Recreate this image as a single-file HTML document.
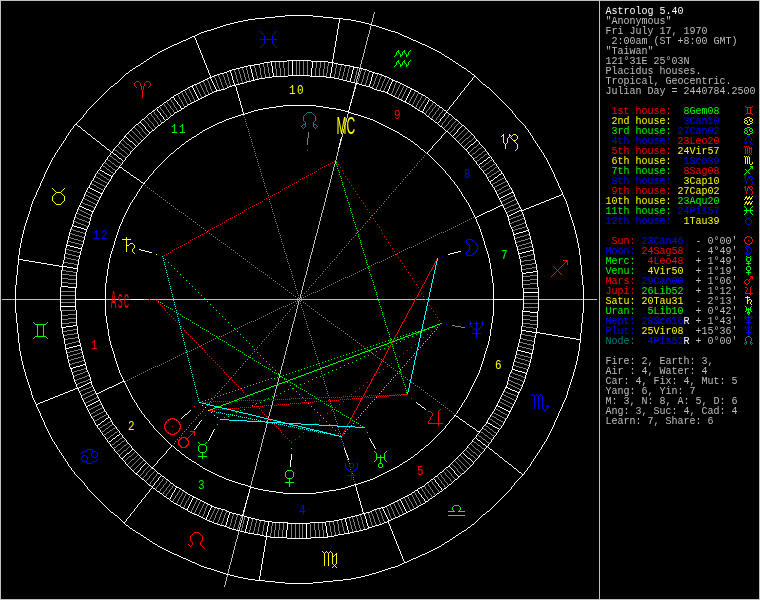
<!DOCTYPE html>
<html><head><meta charset="utf-8"><title>Astrolog 5.40</title>
<style>
html,body{margin:0;padding:0;background:#000;}
#c{position:relative;width:760px;height:600px;overflow:hidden;background:#000;}
svg{position:absolute;left:0;top:0;will-change:transform;}
svg path{stroke-width:1;fill:none;}
svg text{font-family:"Liberation Mono",monospace;}
svg text.ang{font-family:"Liberation Sans",sans-serif;font-size:11px;}
#side{position:absolute;left:0;top:0;width:760px;height:600px;will-change:transform;}
.r{position:absolute;left:605.5px;height:10px;font:10px/10px "Liberation Mono",monospace;color:#bfbfbf;white-space:pre;}
</style></head><body>
<div id="c">
<svg width="760" height="600" viewBox="0 0 760 600">
<g shape-rendering="crispEdges">
<path stroke="#ffffff" d="M285 15.5h28m-38 1h10m28 0h10m-58 1h10m48 0h10m-78 1h10m68 0h10m-95 1h7m88 0h8m-108 1h5m103 0h5m-118 1h5m113 0h5m-127 1h4m123 0h4m-135 1h4m131 0h4m-143 1h4m139 0h3m-149 1h3m146 0h4m-156 1h3m153 0h3m-162 1h3m159 0h3m-168 1h3m165 0h3m-174 1h3m171 0h3m-181 1h4m177 0h3m-187 1h3m184 0h4m-194 1h3m191 0h3m-199 1h2m197 0h2m-203 1h2m201 0h2m-207 1h2m205 0h2m-212 1h3m209 0h3m-217 1h2m215 0h2m-221 1h2m219 0h2m-225 1h2m223 0h2m-230 1h3m227 0h3m-235 1h2m233 0h2m-239 1h2m237 0h2m-243 1h2m241 0h2m-248 1h3m245 0h3m-253 1h2m251 0h2m-257 1h2m255 0h2m-261 1h2m259 0h2m-265 1h2m263 0h2m-269 1h2m267 0h2m-273 1h2m271 0h2m-277 1h2m275 0h2m-281 1h2m279 0h2m-286 2h2m285 0h2m-291 1h2m290 1h2m-297 1h2m295 0h2m-302 2h2m301 0h2m-165 1h24m-167 1h2m124 0h17m24 0h17m125 0h2m-191 1h6m58 0h6m-193 1h2m117 0h4m70 0h4m118 0h2m-204 1h6m78 0h6m-206 1h2m108 0h6m90 0h6m109 0h2m-325 1h2m106 0h4m102 0h4m-114 1h4m109 0h6m103 0h2m-331 1h2m101 0h4m119 0h4m101 0h2m-234 1h4m127 0h4m-237 1h2m97 0h3m135 0h2m-142 1h2m140 0h3m96 0h2m-246 1h3m145 0h3m-249 1h2m92 0h4m151 0h4m-162 1h3m159 0h3m90 0h2m-260 1h3m71 0h22m72 0h2m-172 1h2m58 0h16m22 0h16m58 0h3m87 0h2m-267 1h3m53 0h7m54 0h8m53 0h2m-182 1h2m50 0h6m69 0h5m50 0h2m-186 1h2m48 0h4m80 0h4m48 0h2m-190 1h2m46 0h4m88 0h4m45 0h3m-194 1h2m44 0h4m96 0h4m44 0h3m-199 1h2m43 0h3m104 0h4m43 0h2m-285 1h2m80 0h2m41 0h4m111 0h4m41 0h2m-208 1h3m39 0h4m119 0h3m40 0h2m79 0h2m-293 1h2m38 0h4m126 0h4m38 0h2m-295 1h2m77 0h3m36 0h3m134 0h4m36 0h2m-220 1h2m37 0h2m141 0h2m36 0h2m77 0h2m-264 1h2m145 0h2m36 0h2m-227 1h2m34 0h4m149 0h3m34 0h3m-231 1h2m31 0h5m156 0h4m33 0h2m-235 1h2m31 0h3m164 0h4m31 0h2m-206 1h2m171 0h3m-210 1h2m30 0h2m175 0h2m30 0h2m-245 1h2m30 0h2m179 0h2m30 0h2m-249 1h2m30 0h2m183 0h2m30 0h2m-221 1h2m187 0h2m-224 1h3m28 0h2m191 0h2m29 0h2m-228 1h2m195 0h2m-201 1h2m199 0h2m-234 1h2m27 0h2m203 0h2m27 0h2m-238 1h2m207 0h3m-242 1h2m26 0h2m211 0h2m26 0h2m-245 1h2m215 0h2m-221 1h2m219 0h2m-251 1h2m121 0h33m121 0h2m-254 1h2m89 0h7m33 0h7m89 0h2m-257 1h2m110 0h7m47 0h6m111 0h2m-261 1h3m79 0h6m60 0h7m79 0h2m-159 1h5m73 0h5m-188 1h2m24 0h2m73 0h4m83 0h4m73 0h2m24 0h2m-269 1h2m72 0h3m91 0h4m71 0h3m-248 1h2m71 0h3m97 0h3m71 0h2m22 0h2m-299 1h2m94 0h3m103 0h3m-113 1h4m109 0h4m91 0h2m-280 1h2m65 0h3m117 0h3m-126 1h3m123 0h3m63 0h2m-197 1h3m129 0h3m-138 1h3m135 0h3m-228 1h2m22 0h2m58 0h3m141 0h3m58 0h2m22 0h2m-233 1h2m147 0h2m-153 1h2m151 0h2m-238 1h2m21 0h2m55 0h3m155 0h2m56 0h2m-220 1h2m160 0h2m-306 1h2m59 0h2m77 0h2m164 0h2m-225 1h2m53 0h2m168 0h2m77 0h2m-386 1h2m131 0h2m172 0h2m53 0h2m-233 1h2m176 0h2m-182 1h2m180 0h2m-186 1h2m184 0h2m-310 1h2m67 0h2m49 0h2m188 0h2m0 1h2m49 0h2m-299 1h2m49 0h2m195 0h2m-311 2h2m107 0h2m201 0h2m-278 2h2m68 0h2m207 0h2m-213 1h2m211 0h2m-314 1h2m94 1h2m217 0h2m66 1h2m-381 1h2m31 0h2m54 0h2m223 0h2m-231 3h2m231 0h2m54 0h2m-371 1h2m73 3h2m-72 1h2m312 0h2m42 0h2m-356 3h2m58 1h2m-59 1h2m372 3h2m-371 1h2m363 2h2m-6 3h2m-363 4h3m-22 3h2m22 0h2m-24 1h2m23 1h2m-24 1h2m394 0h2m-396 1h2m390 0h2m-392 1h2m20 0h2m-22 1h2m21 1h2m359 0h2m-360 2h2m352 1h2m-4 1h2m-350 1h2m0 1h2m-57 4h2m0 1h2m0 1h2m0 1h2m0 1h2m0 1h2m411 0h3m-414 1h3m406 0h2m-4 1h2m52 0h2m-58 1h2m52 0h2m-58 1h2m51 0h3m-58 1h2m51 0h2m-57 1h2m50 0h3m-5 1h2m-5 1h3m-5 1h2m-5 1h3m-5 1h2m-5 1h3m-39 1h3m31 0h2m-457 1h3m416 0h2m31 0h3m-452 1h2m412 0h2m31 0h2m-447 1h2m408 0h2m30 0h3m-443 1h3m403 0h2m30 0h2m-437 1h2m399 0h2m27 0h5m-433 1h3m393 0h3m27 0h2m-34 1h2m28 0h2m-34 1h2m28 0h2m-34 1h2m28 0h2m-34 1h2m28 0h2m-34 1h2m28 0h2m-34 1h2m-405 8h2m0 1h3m0 1h4m0 1h3m0 1h3m439 1h3m-6 1h3m-7 1h4m-7 1h3m-6 1h3m-450 11h4m0 1h4m0 1h4m0 1h4m57 1h2m0 1h4m385 0h4m-389 1h4m309 0h3m65 0h4m-381 1h3m302 0h4m64 0h4m-76 1h4m64 0h4m-74 1h2m-432 5h5m0 1h6m0 1h6m0 1h6m0 1h6m0 1h6m0 1h6m0 1h8m0 1h6m0 1h5m455 3h5m-12 1h7m-11 1h4m-465 13h7m0 1h9m446 5h16m-464 7h31m25 0h13m349 0h31m-464 7h16m446 5h8m0 1h8m-465 13h4m-11 1h7m-12 1h5m455 3h5m0 1h6m0 1h8m0 1h6m0 1h6m0 1h6m0 1h6m0 1h6m0 1h6m0 1h5m-504 6h4m-8 1h4m-8 1h4m-8 1h4m448 2h4m0 1h4m0 1h4m0 1h4m-450 11h3m-6 1h3m-7 1h4m-7 1h3m-6 1h3m439 1h3m0 1h3m0 1h4m0 1h3m0 1h2m-405 8h3m-36 1h3m28 0h2m-35 1h2m29 0h2m-35 1h2m29 0h2m-35 1h2m29 0h2m-35 1h2m29 0h2m-35 1h2m28 0h3m393 0h3m-433 1h4m28 0h2m399 0h2m-437 1h2m30 0h2m403 0h2m-442 1h3m30 0h2m407 0h3m-447 1h2m31 0h2m412 0h2m-452 1h3m31 0h2m416 0h3m-457 1h2m31 0h3m-39 1h3m-5 1h2m-5 1h3m-5 1h2m-5 1h3m-5 1h2m-5 1h3m50 0h2m-57 1h2m51 0h2m-58 1h3m51 0h2m-58 1h2m52 0h2m-58 1h2m52 0h2m326 0h2m-332 1h2m406 0h2m-412 1h2m410 0h2m-78 1h2m76 0h2m0 1h2m0 1h2m0 1h2m0 1h3m-326 3h2m267 1h2m0 1h2m-350 1h2m-4 1h2m352 1h2m-360 2h2m359 0h2m21 1h2m0 1h2m-392 1h2m367 0h2m21 0h2m-396 1h2m372 1h2m21 0h2m0 1h2m-24 1h2m22 0h2m-22 3h3m-363 4h2m-6 3h2m363 2h2m-371 1h2m372 3h2m-59 1h2m58 1h2m-356 3h2m287 0h2m67 0h2m-315 1h2m-52 3h2m366 0h2m-315 1h2m231 0h2m-231 3h2m223 0h2m87 0h2m-381 1h2m345 0h2m-281 1h2m217 0h2m-218 2h2m211 0h2m98 0h2m-313 1h2m207 0h2m-208 2h2m201 0h2m107 0h2m-311 2h2m195 0h2m49 0h2m-299 1h2m242 0h2m49 0h2m-296 1h2m49 0h2m188 0h2m119 0h2m-311 1h2m184 0h2m-186 1h2m180 0h2m-182 1h2m176 0h2m-178 1h2m172 0h2m53 0h2m77 0h2m-386 1h2m21 0h2m53 0h2m168 0h2m77 0h2m-328 1h2m77 0h2m164 0h2m139 0h2m-307 1h2m160 0h2m-219 1h2m55 0h3m155 0h2m56 0h2m21 0h2m-238 1h2m151 0h2m-153 1h2m147 0h2m-233 1h2m22 0h2m58 0h3m141 0h3m58 0h2m22 0h2m-228 1h3m135 0h3m-138 1h3m129 0h3m-132 1h3m123 0h3m63 0h2m-258 1h2m65 0h3m117 0h3m-120 1h4m109 0h4m91 0h2m-302 1h2m94 0h3m103 0h3m-203 1h2m22 0h2m71 0h3m97 0h3m71 0h2m-248 1h3m71 0h4m91 0h3m72 0h2m-269 1h2m24 0h2m73 0h4m83 0h4m73 0h2m24 0h2m-188 1h5m73 0h5m-159 1h2m79 0h6m60 0h7m79 0h3m-261 1h2m110 0h7m47 0h6m111 0h2m-257 1h2m89 0h7m33 0h7m89 0h2m-254 1h2m121 0h33m121 0h2m-251 1h2m219 0h2m-221 1h2m215 0h2m-245 1h2m26 0h2m211 0h2m26 0h2m-242 1h3m207 0h2m-238 1h2m27 0h2m203 0h2m27 0h2m-234 1h2m199 0h2m-201 1h2m195 0h2m-228 1h2m29 0h2m191 0h2m28 0h3m-224 1h2m187 0h2m-221 1h2m30 0h2m183 0h2m30 0h2m-249 1h2m30 0h2m179 0h2m30 0h2m-245 1h2m30 0h2m175 0h2m30 0h2m-210 1h3m171 0h2m-206 1h2m31 0h3m164 0h4m31 0h2m-235 1h2m32 0h4m156 0h4m33 0h2m-231 1h3m33 0h4m149 0h3m35 0h2m-189 1h2m145 0h2m36 0h2m-224 1h2m37 0h2m141 0h2m36 0h2m77 0h2m-378 1h2m77 0h2m37 0h3m134 0h4m36 0h2m-216 1h2m38 0h4m126 0h4m38 0h2m-212 1h3m39 0h4m119 0h3m40 0h2m79 0h2m-370 1h2m80 0h2m41 0h4m111 0h4m41 0h2m-203 1h2m43 0h3m104 0h4m43 0h2m-199 1h2m44 0h4m96 0h4m44 0h3m-195 1h2m46 0h4m88 0h4m46 0h2m-190 1h2m48 0h4m80 0h4m48 0h2m-186 1h2m50 0h6m69 0h5m49 0h3m-182 1h3m53 0h7m54 0h8m53 0h2m-266 1h2m87 0h2m58 0h16m22 0h16m58 0h3m-173 1h3m70 0h23m72 0h2m-167 1h3m159 0h3m90 0h2m-348 1h2m92 0h4m151 0h4m-155 1h3m145 0h3m-148 1h2m139 0h4m96 0h2m-340 1h2m97 0h3m135 0h2m-137 1h4m127 0h4m-234 1h2m101 0h4m119 0h4m101 0h2m-226 1h4m110 0h5m103 0h2m-328 1h2m106 0h4m102 0h4m-216 1h2m108 0h6m90 0h6m109 0h2m-207 1h6m78 0h6m-203 1h2m117 0h4m70 0h4m118 0h2m-194 1h6m57 0h7m-190 1h2m124 0h17m24 0h17m125 0h2m-168 1h24m-164 1h2m301 0h2m-302 2h2m295 0h2m-4 1h2m-294 1h2m0 1h2m285 0h2m-286 2h2m279 0h2m-281 1h2m275 0h2m-277 1h2m271 0h2m-273 1h2m267 0h2m-269 1h2m263 0h2m-265 1h2m259 0h2m-261 1h2m255 0h2m-257 1h2m251 0h2m-253 1h3m245 0h3m-248 1h2m241 0h2m-243 1h2m237 0h2m-239 1h2m233 0h2m-235 1h3m227 0h3m-230 1h2m223 0h2m-225 1h2m219 0h2m-221 1h2m215 0h2m-217 1h3m209 0h3m-212 1h2m205 0h2m-207 1h2m201 0h2m-203 1h2m197 0h2m-199 1h3m191 0h3m-194 1h3m184 0h4m-188 1h4m177 0h3m-180 1h3m171 0h3m-174 1h3m165 0h3m-168 1h3m159 0h3m-162 1h3m153 0h3m-156 1h3m146 0h4m-150 1h4m139 0h3m-142 1h4m131 0h4m-135 1h4m123 0h4m-127 1h5m113 0h5m-118 1h5m103 0h5m-108 1h7m88 0h8m-96 1h10m68 0h10m-78 1h10m48 0h10m-58 1h10m28 0h10m-38 1h28m-297.5-298.5v28m1-38v10m0 28v10m1-58v10m0 48v10m1-78v4m0 1v5m0 68v10m1-95v7m0 88v8m1-108v5m0 103v5m1-118v5m0 113v5m1-127v4m0 123v4m1-135v4m0 131v4m1-143v4m0 139v3m1-149v3m0 146v4m1-156v3m0 153v3m1-162v3m0 159v3m1-168v3m0 165v3m1-174v3m0 171v3m1-181v4m0 177v3m1-187v3m0 184v4m1-194v3m0 191v3m1-199v2m0 197v2m1-203v2m0 201v2m1-207v2m0 205v2m1-212v3m0 210v2m1-217v2m0 215v2m1-221v2m0 219v2m1-225v2m0 223v2m1-230v3m0 227v3m1-235v2m0 233v2m1-239v2m0 237v2m1-243v2m0 241v2m1-248v3m0 245v3m1-253v2m0 251v2m1-257v2m0 255v2m1-261v2m0 259v2m1-265v2m0 263v2m1-269v2m0 267v2m1-273v2m0 271v2m1-277v2m0 275v2m1-281v2m0 279v2m1-284v1m0 283v1m1-287v2m0 285v2m1-291v2m0 289v1m1-293v1m0 292v2m1-297v2m0 295v2m1-300v1m0 299v1m1-303v2m0 301v2m1-306v1m0 140v19m0 1v4m0 141v1m1-309v2m0 124v16m0 25v16m0 126v2m1-312v1m0 120v2m0 1v3m0 58v6m0 121v1m1-315v2m0 117v4m0 70v4m0 118v2m1-318v1m0 113v6m0 78v6m0 114v1m1-321v2m0 108v6m0 90v4m0 1v1m0 109v2m1-325v2m0 106v1m0 1v2m0 102v4m0 107v1m1-327v1m0 104v4m0 110v5m0 103v2m1-331v2m0 101v4m0 119v4m0 101v2m1-334v1m0 99v4m0 127v4m0 99v1m1-337v2m0 97v3m0 135v1m0 99v1m1-339v1m0 97v2m0 140v3m0 96v2m1-342v1m0 95v1m0 1v1m0 145v3m0 95v1m1-345v2m0 92v4m0 151v4m0 92v1m1-347v1m0 91v3m0 159v3m0 90v2m1-260v3m0 71v11m0 1v6m0 1v3m0 72v2m0 90v1m1-352v1m0 88v2m0 58v15m0 23v15m0 59v3m0 88v1m1-354v1m0 2v1m0 83v3m0 53v3m0 1v3m0 54v8m0 53v1m0 88v1m1-356v1m0 85v2m0 50v6m0 69v5m0 50v2m0 86v1m1-358v1m0 84v1m0 49v4m0 80v4m0 48v2m0 85v1m1-360v1m0 7v1m0 75v2m0 46v4m0 88v2m0 1v1m0 46v2m0 84v1m1-362v1m0 9v1m0 72v2m0 44v1m0 1v2m0 96v4m0 44v3m0 82v1m1-364v1m0 11v1m0 69v2m0 43v3m0 104v4m0 43v2m0 81v1m1-367v2m0 80v2m0 41v4m0 111v4m0 41v2m0 80v1m1-369v1m0 79v3m0 39v4m0 119v3m0 40v2m0 79v2m1-372v1m0 17v1m0 60v2m0 38v4m0 126v2m0 1v1m0 38v2m0 79v1m1-375v2m0 19v1m0 57v2m0 38v2m0 134v4m0 37v1m0 78v1m1-377v1m0 22v1m0 54v2m0 37v2m0 141v2m0 36v2m0 77v2m1-380v1m0 115v2m0 145v2m0 36v2m0 77v1m1-382v1m0 76v2m0 34v4m0 149v3m0 35v2m0 76v1m1-384v1m0 27v1m0 47v2m0 32v4m0 156v4m0 33v2m0 75v1m1-386v1m0 29v1m0 44v2m0 31v3m0 164v1m0 1v2m0 31v2m0 74v1m1-388v1m0 31v1m0 42v1m0 31v2m0 171v2m0 31v1m0 74v1m1-390v1m0 73v2m0 30v1m0 176v2m0 30v2m0 73v1m1-392v1m0 72v2m0 30v2m0 179v2m0 30v2m0 72v1m1-394v1m0 36v1m0 34v2m0 30v2m0 183v2m0 30v2m0 71v1m1-396v1m0 38v1m0 32v1m0 30v2m0 188v1m0 102v1m1-398v1m0 70v2m0 29v2m0 191v2m0 29v2m0 70v1m1-400v1m0 70v1m0 29v2m0 195v2m0 29v1m0 70v1m1-402v1m0 43v1m0 26v1m0 28v2m0 199v1m0 29v1m0 70v1m1-404v1m0 45v1m0 23v2m0 27v2m0 203v2m0 20v1m0 6v2m0 69v1m1-406v1m0 47v1m0 21v1m0 27v2m0 207v2m0 17v1m0 9v1m0 69v1m1-408v1m0 68v2m0 26v1m0 212v2m0 26v2m0 68v1m1-410v1m0 68v1m0 26v2m0 215v2m0 26v1m0 68v1m1-412v1m0 52v1m0 15v1m0 9v1m0 15v2m0 219v2m0 9v1m0 15v1m0 68v1m1-414v1m0 54v1m0 12v2m0 25v1m0 95v16m0 1v16m0 95v1m0 7v1m0 17v2m0 67v1m1-416v1m0 56v1m0 10v1m0 25v2m0 89v7m0 33v7m0 89v2m0 25v1m0 67v1m1-418v1m0 66v2m0 25v1m0 84v7m0 47v6m0 85v1m0 25v2m0 66v1m1-420v1m0 66v1m0 25v2m0 79v6m0 60v7m0 79v2m0 25v1m0 66v1m1-422v1m0 61v1m0 4v1m0 25v1m0 76v5m0 73v5m0 102v1m0 66v1m1-424v1m0 63v1m0 1v2m0 24v2m0 73v4m0 83v4m0 73v2m0 24v2m0 65v1m1-335v2m0 72v3m0 91v3m0 72v2m0 18v1m0 5v1m1-296v1m0 23v1m0 72v3m0 97v3m0 71v2m0 15v1m0 7v1m1-363v1m0 63v2m0 2v1m0 20v1m0 70v3m0 103v3m0 70v1m0 23v1m0 64v1m1-430v1m0 63v1m0 24v1m0 67v4m0 109v4m0 67v1m0 23v2m0 63v1m1-368v1m0 23v2m0 65v3m0 117v3m0 65v1m0 10v1m0 13v1m1-306v1m0 8v1m0 14v1m0 64v3m0 123v3m0 63v2m0 7v1m0 15v1m1-371v1m0 62v1m0 10v1m0 12v1m0 62v3m0 129v3m0 62v1m0 23v1m0 62v1m1-436v1m0 62v1m0 12v1m0 10v1m0 60v3m0 135v3m0 60v1m0 23v1m0 62v1m1-438v1m0 61v2m0 22v1m0 59v3m0 141v3m0 58v2m0 1v1m0 20v2m0 61v1m1-440v1m0 61v1m0 23v1m0 58v2m0 147v2m0 58v1m0 23v1m0 61v1m1-442v1m0 61v1m0 18v1m0 4v1m0 57v2m0 151v2m0 57v1m0 85v1m1-444v1m0 61v1m0 20v1m0 1v2m0 4v1m0 50v3m0 155v2m0 56v2m0 22v1m0 61v1m1-446v1m0 61v1m0 22v1m0 7v1m0 47v2m0 160v2m0 56v1m0 19v1m0 2v1m1-386v1m0 61v1m0 22v1m0 54v2m0 165v1m0 55v1m0 17v1m0 4v1m0 61v1m1-450v1m0 60v1m0 22v2m0 53v2m0 168v2m0 54v1m0 15v1m0 6v2m0 57v1m0 2v1m1-391v1m0 2v1m0 19v1m0 13v1m0 39v2m0 172v2m0 53v2m0 12v1m0 9v1m0 54v2m1-388v1m0 4v1m0 17v1m0 52v2m0 176v2m0 53v1m0 22v1m0 52v1m1-447v1m0 59v1m0 6v1m0 15v1m0 51v2m0 180v2m0 52v1m0 22v1m0 50v1m0 8v1m1-456v1m0 59v1m0 8v1m0 13v1m0 18v1m0 31v2m0 184v2m0 51v1m0 7v1m0 14v1m0 48v1m0 10v1m1-398v1m0 21v2m0 20v1m0 28v2m0 188v2m0 50v1m0 5v1m0 16v1m0 45v2m1-387v1m0 21v1m0 50v1m0 192v2m0 49v2m0 2v1m0 18v1m0 43v1m1-445v1m0 58v1m0 13v1m0 7v1m0 49v2m0 195v2m0 49v1m0 21v1m0 41v1m0 16v1m1-403v1m0 15v1m0 5v1m0 26v1m0 22v1m0 199v1m0 71v1m0 39v1m1-386v1m0 17v1m0 3v1m0 48v2m0 201v2m0 48v1m0 21v1m0 36v2m1-444v1m0 57v1m0 19v1m0 1v1m0 48v1m0 205v1m0 48v1m0 56v1m0 22v1m1-386v1m0 31v1m0 15v2m0 207v2m0 47v1m0 54v1m1-363v1m0 46v2m0 211v2m0 46v1m0 18v1m0 32v2m1-384v1m0 20v1m0 46v1m0 215v1m0 46v1m0 16v1m0 3v1m0 28v1m1-362v1m0 36v1m0 8v2m0 217v2m0 45v1m0 14v1m0 5v1m0 26v1m1-440v1m0 56v1m0 20v1m0 38v1m0 6v1m0 221v1m0 45v1m0 11v2m0 7v1m0 24v1m0 31v1m1-415v1m0 2v1m0 17v1m0 44v2m0 223v2m0 44v1m0 9v1m0 10v1m0 21v2m1-378v1m0 15v1m0 44v1m0 227v1m0 44v1m0 7v1m0 32v1m1-438v1m0 62v1m0 13v1m0 274v1m0 44v1m0 5v1m0 32v1m0 37v1m1-419v1m0 7v1m0 11v1m0 43v1m0 232v2m0 43v1m0 3v1m0 15v1m0 16v1m1-381v1m0 9v2m0 8v1m0 43v1m0 235v1m0 43v1m0 1v1m0 17v1m0 13v2m1-437v1m0 55v1m0 12v1m0 6v1m0 43v1m0 237v1m0 43v1m0 19v1m0 11v1m0 43v1m1-424v1m0 14v1m0 4v1m0 43v1m0 239v1m0 43v1m0 19v1m0 9v1m1-380v1m0 16v1m0 2v1m0 42v2m0 241v1m0 43v1m0 19v1m0 7v1m1-435v1m0 74v1m0 42v1m0 244v2m0 42v1m0 24v2m0 48v1m1-366v1m0 247v1m0 42v1m0 22v1m1-378v1m0 18v1m0 42v1m0 249v1m0 63v1m1-433v1m0 54v1m0 61v1m0 251v1m0 61v1m0 54v1m1-372v2m0 253v2m0 38v1m0 18v1m1-357v1m0 40v1m0 257v1m0 36v1m0 3v1m0 13v2m1-376v1m0 18v1m0 40v1m0 259v1m0 34v1m0 5v1m0 11v1m0 6v1m1-382v1m0 18v1m0 40v1m0 261v1m0 32v1m0 7v1m0 9v1m0 8v1m1-438v1m0 55v2m0 15v1m0 40v1m0 263v1m0 29v2m0 9v1m0 7v1m0 64v1m1-435v1m0 54v1m0 265v1m0 27v1m0 17v2m1-374v1m0 5v1m0 52v1m0 267v1m0 25v1m0 17v1m0 14v1m1-380v2m0 9v1m0 39v1m0 269v1m0 23v1m0 15v1m0 1v1m1-362v1m0 7v1m0 39v1m0 271v1m0 21v1m0 17v1m1-372v1m0 11v1m0 45v1m0 273v1m0 19v1m0 37v1m1-392v1m0 13v2m0 42v1m0 275v1m0 17v1m0 39v1m1-377v1m0 1v1m0 38v1m0 277v1m0 15v1m0 22v1m1-358v1m0 38v1m0 279v1m0 13v1m0 24v1m1-378v1m0 56v1m0 281v1m0 10v2m0 44v1m1-341v1m0 283v1m0 8v1m1-333v1m0 37v1m0 285v1m0 6v1m0 30v1m1-382v1m0 17v1m0 37v1m0 287v1m0 4v1m0 32v1m0 17v1m1-402v1m0 17v1m0 37v1m0 289v1m0 2v1m0 34v1m0 14v2m0 1v1m1-56v2m0 48v2m1-4v2m1-399v1m0 17v1m0 37v1m0 293v1m0 37v1m0 7v1m0 9v1m1-405v2m0 13v1m0 37v1m0 295v1m0 37v1m0 4v2m1-392v1m0 49v1m0 297v1m0 39v2m1-389v1m0 47v1m0 299v1m1-348v2m1 0v1m1 0v1m0 41v1m0 303v1m1-360v1m0 13v2m0 38v1m0 305v1m0 53v1m1-398v1m0 35v1m0 272v1m0 34v1m0 35v1m1-73v1m1-2v1m1-310v1m0 35v1m0 271v1m0 39v1m0 35v1m1-350v1m0 313v1m2-369v1m0 16v1m0 307v1m0 79v1m0 14v1m0 1v1m1-371v1m0 271v1m0 45v1m0 47v2m1-97v1m0 92v2m1-96v1m0 91v2m1-366v1m0 321v1m0 39v2m1-415v1m0 410v2m1-412v2m1-53v1m0 52v2m0 337v1m1-392v2m0 52v2m0 334v1m1-389v3m0 51v2m0 39v1m0 290v2m0 35v1m1-421v2m0 51v2m0 327v1m1-381v3m0 50v1m0 325v1m1-377v2m0 83v1m0 288v2m0 41v1m1-416v3m0 368v1m1-369v2m0 365v1m1-366v3m0 73v1m0 335v1m1-410v2m1 0v3m1 0v2m1 0v3m0 449v2m1-451v2m0 445v2m1-447v3m0 367v1m0 71v3m1-442v2m0 363v2m0 70v2m1-437v2m0 1v1m0 357v2m0 70v2m1-431v2m0 353v2m0 71v1m1-427v2m0 349v2m1-351v2m0 345v2m1-347v2m0 342v1m1-343v2m1 0v1m9 435v1m1-4v3m1-7v4m1-7v3m1-5v2m1-444v2m1 0v3m1 0v4m1 0v3m1 0v2m1 1v1m1 0v4m1 0v3m1 0v4m1 0v3m1 0v4m1 0v3m1 0v4m0 402v1m1-403v2m0 396v4m1-7v3m1-7v4m0 22v3m1-32v3m0 22v4m1-33v4m0 21v4m1-32v3m0 22v3m1-32v4m1-427v3m0 419v1m1-420v4m1 0v4m1 0v3m6 496v4m1-10v6m1-12v6m1-12v6m1-12v6m1-12v6m1-12v6m1-14v4m0 1v3m1-14v6m1-10v4m3-464v4m1 0v7m1 0v3m13 454v7m1-13v6m3-70v7m1-13v6m1-399v14m14 449v14m5-470v8m1-14v6m13 455v3m1 0v7m1 0v3m3-463v4m1-10v6m1-14v3m0 1v4m1-14v6m1-12v6m1-12v6m1-12v6m1-12v6m1-12v6m0 118v2m1-130v4m0 120v4m1-8v4m1-6v2m3 309v2m1 0v3m0 66v3m1-69v2m0 67v4m1-71v3m0 68v4m1-420v1m0 347v2m0 70v3m1-427v4m1-32v3m0 22v3m1-32v4m0 21v4m1-33v4m0 22v3m1-31v2m0 22v4m1-7v3m1-7v4m0 396v2m1-403v1m0 402v4m1 0v3m1 0v4m1 0v3m1 0v4m1 0v3m1 0v4m1 0v1m1 1v2m1 0v3m1 0v4m1 0v3m1 0v1m1-443v2m0 352v1m1-358v3m0 355v2m1-364v4m0 360v2m1-369v3m0 366v1m1-371v1m0 370v2m1 0v2m1 0v1m7 59v1m1 0v2m1 0v2m1 0v2m1 0v2m1-426v1m0 425v2m1-430v2m0 428v1m0 2v2m1-438v3m0 435v2m1-442v2m0 440v3m1-447v2m0 445v2m1-450v1m0 449v3m1 0v2m1 0v3m1 0v2m1 0v3m1 0v2m1 0v3m1-416v1m0 331v1m0 83v2m1-51v1m0 50v3m1-53v2m0 51v2m1-421v1m0 327v1m0 39v2m0 51v3m1-54v2m0 52v2m1-54v2m0 52v1m1-462v1m0 408v2m1-413v2m0 411v1m1-416v2m0 40v1m0 321v1m1-367v2m1-4v2m1-4v2m0 48v1m0 317v1m1-354v1m0 387v1m2-352v1m0 313v1m1-350v1m0 35v1m0 311v1m0 35v1m2-90v1m1-294v1m0 35v1m0 257v1m0 49v1m0 35v1m1-398v1m0 53v1m0 305v1m0 38v2m0 13v1m1-360v1m0 303v1m0 41v1m1-346v1m0 256v1m0 44v1m0 43v1m1-89v1m0 88v2m1 0v1m1-389v2m0 39v1m0 297v1m0 49v1m1-392v2m0 4v1m0 37v1m0 256v1m0 38v1m0 37v1m0 13v2m1-405v1m0 8v2m0 7v1m0 37v1m0 256v1m0 36v1m0 37v1m0 17v1m1-399v1m0 10v1m0 367v1m1-382v2m0 48v2m1-56v1m0 1v2m0 49v1m0 2v1m0 289v1m0 55v1m1-402v1m0 17v1m0 32v1m0 4v1m0 287v1m0 37v1m0 17v1m1-382v1m0 30v1m0 6v1m0 285v1m0 37v1m1-333v1m0 8v1m0 283v1m1-341v1m0 44v2m0 10v1m0 281v1m0 56v1m1-378v1m0 24v1m0 13v1m0 279v1m0 38v1m1-358v1m0 22v1m0 15v1m0 277v1m0 38v1m0 1v1m1-377v1m0 39v1m0 17v1m0 275v1m0 42v2m0 13v1m1-392v1m0 37v1m0 19v1m0 273v1m0 45v1m0 11v1m1-372v1m0 17v1m0 21v1m0 271v1m0 39v1m0 7v1m1-362v1m0 1v1m0 15v1m0 23v1m0 269v1m0 39v1m0 9v2m1-380v1m0 14v1m0 3v1m0 13v1m0 25v1m0 267v1m0 39v1m0 12v1m0 5v1m1-374v2m0 17v1m0 27v1m0 265v1m0 54v1m1-435v1m0 64v1m0 17v2m0 29v1m0 263v1m0 56v2m0 55v1m1-438v1m0 8v1m0 9v1m0 7v1m0 32v1m0 261v1m0 40v1m0 18v1m1-382v1m0 6v1m0 11v1m0 5v1m0 34v1m0 259v1m0 40v1m0 18v1m1-435v1m0 58v2m0 13v1m0 3v1m0 36v1m0 257v1m0 40v1m0 73v1m1-431v1m0 16v1m0 1v1m0 38v2m0 253v2m0 40v1m1-358v1m0 61v1m0 251v1m0 61v1m1-378v1m0 63v1m0 249v1m0 61v1m1-378v1m0 3v1m0 18v1m0 42v1m0 247v1m0 61v1m1-428v1m0 48v2m0 24v1m0 42v1m0 244v2m0 42v1m0 74v1m1-435v1m0 27v1m0 42v2m0 241v1m0 43v1m0 2v1m1-363v1m0 9v1m0 19v1m0 43v1m0 239v1m0 43v1m0 4v1m0 14v1m1-424v1m0 43v1m0 11v1m0 19v1m0 43v1m0 237v1m0 43v1m0 6v1m0 12v1m0 55v1m1-437v2m0 13v1m0 17v1m0 1v1m0 43v1m0 235v1m0 43v1m0 8v1m0 10v1m1-381v1m0 16v1m0 15v1m0 3v1m0 43v2m0 232v1m0 43v1m0 10v2m0 7v1m1-419v1m0 37v1m0 32v1m0 5v1m0 44v1m0 274v1m0 13v1m0 62v1m1-438v1m0 32v1m0 7v1m0 44v1m0 227v1m0 44v1m0 15v1m1-378v2m0 21v1m0 9v2m0 9v1m0 44v2m0 223v2m0 44v1m0 17v1m0 2v1m1-415v1m0 31v1m0 24v1m0 7v1m0 12v1m0 45v1m0 221v1m0 6v1m0 38v1m0 20v1m0 56v1m1-440v1m0 26v1m0 5v1m0 14v1m0 45v2m0 217v2m0 8v1m0 36v1m1-363v2m0 28v1m0 3v1m0 16v1m0 46v1m0 215v1m0 46v1m0 20v1m1-410v1m0 25v1m0 31v1m0 1v1m0 18v1m0 46v2m0 211v2m0 46v1m0 20v1m0 57v1m1-442v1m0 54v1m0 47v2m0 207v2m0 15v1m0 31v1m1-363v1m0 56v1m0 48v1m0 205v1m0 48v1m0 1v1m1-366v2m0 36v1m0 21v1m0 48v2m0 201v2m0 48v1m0 3v1m0 17v1m1-386v1m0 39v1m0 71v1m0 199v1m0 22v1m0 26v1m0 5v1m0 15v1m1-403v1m0 16v1m0 41v1m0 21v1m0 49v2m0 195v2m0 24v1m0 24v1m0 7v1m0 13v1m0 58v1m1-460v1m0 14v1m0 43v1m0 18v1m0 2v1m0 50v1m0 192v2m0 49v2m0 9v1m0 11v1m0 58v1m1-446v2m0 45v1m0 16v1m0 4v2m0 49v2m0 188v2m0 50v1m0 22v1m1-387v1m0 48v1m0 14v1m0 7v1m0 50v2m0 184v2m0 32v1m0 18v1m0 22v1m1-396v1m0 8v1m0 50v1m0 12v1m0 9v1m0 51v2m0 180v2m0 52v1m0 15v1m0 6v1m0 59v1m1-454v1m0 6v1m0 52v1m0 22v1m0 52v2m0 176v2m0 53v1m0 17v1m0 4v1m0 59v1m1-448v2m0 54v1m0 22v1m0 53v2m0 172v2m0 40v1m0 12v2m0 19v1m0 2v1m1-388v1m0 57v1m0 7v1m0 14v2m0 53v2m0 168v2m0 54v1m0 22v2m1-389v1m0 60v2m0 4v1m0 17v1m0 54v2m0 164v2m0 55v1m0 22v1m0 61v1m1-386v1m0 2v1m0 19v1m0 56v1m0 160v2m0 48v1m0 7v1m0 22v1m0 61v1m1-446v1m0 61v1m0 22v2m0 55v3m0 155v2m0 51v1m0 4v2m0 1v1m0 20v1m0 61v1m1-444v1m0 85v1m0 57v2m0 151v2m0 57v1m0 4v1m0 18v1m0 61v1m1-442v1m0 61v1m0 23v1m0 58v2m0 147v2m0 58v1m0 23v1m0 61v1m1-440v1m0 61v2m0 20v1m0 1v2m0 58v3m0 141v3m0 59v1m0 22v2m0 61v1m1-438v1m0 62v1m0 23v1m0 60v3m0 135v3m0 60v1m0 10v1m0 12v1m0 62v1m1-436v1m0 62v1m0 23v1m0 62v3m0 129v3m0 62v1m0 12v1m0 10v1m0 62v1m1-434v1m0 62v1m0 15v1m0 7v1m0 64v3m0 123v3m0 63v2m0 14v1m0 8v1m0 62v1m1-369v1m0 13v1m0 9v2m0 65v3m0 117v3m0 65v1m0 24v1m1-304v1m0 24v1m0 67v4m0 109v4m0 67v1m0 23v2m1-366v1m0 63v2m0 23v1m0 70v3m0 103v3m0 70v1m0 20v1m0 2v1m0 64v1m1-428v1m0 64v1m0 7v1m0 15v2m0 71v3m0 97v3m0 72v1m0 23v1m0 64v1m1-361v1m0 5v1m0 18v2m0 72v3m0 91v3m0 72v2m1-269v2m0 24v2m0 73v4m0 83v4m0 73v2m0 24v2m0 1v1m1-360v1m0 66v1m0 102v5m0 73v5m0 76v1m0 25v1m0 4v1m0 61v1m1-422v1m0 66v1m0 25v2m0 79v6m0 60v7m0 79v2m0 25v1m0 66v1m1-420v1m0 66v2m0 25v1m0 84v7m0 47v6m0 85v1m0 25v2m0 66v1m1-418v1m0 67v1m0 25v2m0 89v7m0 33v7m0 89v2m0 11v1m0 13v1m0 10v1m0 56v1m1-416v1m0 67v2m0 17v1m0 7v1m0 95v16m0 1v16m0 95v1m0 25v2m0 12v1m0 54v1m1-414v1m0 68v1m0 15v1m0 9v2m0 219v2m0 25v1m0 15v1m0 52v1m1-412v1m0 68v1m0 26v2m0 215v2m0 26v1m0 68v1m1-410v1m0 68v2m0 26v2m0 212v1m0 26v2m0 68v1m1-408v1m0 69v1m0 9v1m0 17v2m0 207v2m0 27v1m0 21v1m0 47v1m1-406v1m0 69v2m0 6v1m0 20v2m0 203v2m0 27v2m0 23v1m0 45v1m1-404v1m0 70v1m0 29v1m0 199v2m0 28v1m0 26v1m0 43v1m1-402v1m0 70v1m0 29v2m0 195v2m0 29v1m0 70v1m1-400v1m0 70v2m0 29v2m0 191v2m0 29v2m0 70v1m1-398v1m0 102v1m0 188v2m0 30v1m0 32v1m0 38v1m1-396v1m0 71v2m0 30v2m0 183v2m0 30v2m0 34v1m0 36v1m1-394v1m0 72v2m0 30v2m0 179v2m0 30v2m0 37v1m0 34v1m1-392v1m0 73v2m0 30v2m0 176v1m0 30v2m0 73v1m1-390v1m0 74v1m0 31v2m0 171v2m0 31v1m0 74v1m1-388v1m0 74v2m0 31v2m0 165v4m0 31v2m0 44v1m0 29v1m1-386v1m0 75v2m0 32v4m0 156v4m0 33v2m0 47v1m0 27v1m1-384v1m0 76v2m0 34v4m0 149v3m0 35v2m0 76v1m1-382v1m0 77v1m0 37v2m0 145v2m0 36v1m0 78v1m1-380v1m0 77v2m0 37v2m0 141v2m0 36v2m0 55v1m0 21v2m1-378v2m0 77v2m0 37v3m0 134v3m0 37v2m0 58v1m0 19v1m1-374v1m0 79v1m0 38v2m0 1v1m0 126v4m0 38v2m0 61v1m0 17v1m1-372v1m0 79v3m0 39v4m0 119v3m0 40v2m0 79v2m1-370v2m0 80v2m0 41v4m0 111v4m0 41v2m0 80v1m1-366v1m0 81v2m0 43v3m0 104v4m0 43v2m0 69v1m0 11v1m1-364v1m0 82v2m0 44v4m0 96v3m0 45v3m0 72v1m0 9v1m1-362v1m0 83v2m0 46v2m0 1v1m0 88v4m0 46v2m0 76v1m0 7v1m1-360v1m0 84v2m0 48v4m0 80v4m0 48v1m0 86v1m1-358v1m0 85v2m0 50v6m0 69v5m0 50v2m0 86v1m1-356v1m0 86v1m0 1v1m0 53v7m0 54v4m0 1v3m0 53v2m0 84v1m0 2v1m1-354v1m0 88v2m0 58v1m0 1v14m0 22v1m0 1v14m0 58v3m0 88v1m1-352v1m0 89v3m0 71v4m0 1v6m0 1v10m0 72v2m1-259v1m0 91v3m0 159v3m0 90v2m1-348v2m0 92v4m0 151v4m0 92v1m1-344v1m0 95v3m0 145v1m0 1v1m0 95v1m1-342v1m0 97v2m0 140v3m0 96v2m1-340v2m0 97v1m0 1v1m0 135v2m0 98v1m1-336v1m0 99v4m0 127v4m0 99v1m1-334v2m0 101v4m0 119v4m0 101v2m1-331v1m0 104v4m0 110v5m0 103v2m1-328v2m0 106v4m0 102v3m0 108v1m1-324v2m0 108v2m0 1v3m0 90v6m0 109v2m1-321v1m0 113v6m0 78v6m0 114v1m1-318v2m0 117v4m0 70v4m0 118v2m1-315v1m0 120v6m0 58v4m0 1v1m0 121v1m1-312v2m0 124v1m0 1v15m0 24v1m0 1v15m0 125v2m1-309v1m0 140v5m0 1v18m0 141v1m1-306v2m0 301v2m1-303v1m0 299v1m1-300v2m0 295v2m1-297v1m0 292v2m1-294v2m0 289v1m1-290v2m0 285v2m1-287v1m0 283v1m1-284v2m0 279v2m1-281v2m0 275v2m1-277v2m0 271v2m1-273v2m0 267v2m1-269v2m0 263v2m1-265v2m0 259v2m1-261v2m0 255v2m1-257v2m0 251v2m1-253v3m0 245v3m1-248v2m0 241v2m1-243v2m0 237v2m1-239v2m0 233v2m1-235v3m0 227v3m1-230v2m0 223v2m1-225v2m0 219v2m1-221v2m0 215v2m1-217v2m0 210v3m1-212v2m0 205v2m1-207v2m0 201v2m1-203v2m0 197v2m1-199v3m0 191v3m1-194v3m0 184v4m1-188v4m0 177v3m1-180v3m0 171v3m1-174v3m0 165v3m1-168v3m0 159v3m1-162v3m0 153v3m1-156v3m0 146v4m1-150v4m0 139v3m1-142v4m0 131v4m1-135v4m0 123v4m1-127v5m0 113v5m1-118v5m0 103v5m1-108v7m0 88v8m1-96v10m0 68v6m0 1v3m1-78v10m0 48v10m1-58v10m0 28v10m1-38v28"/>
<path stroke="#bfbfbf" d="M0 .5h760m-758 299h13m1 0h44m46 0h25m13 0h5m1 0h149m1 0h115m1 0h9m1 0h2m1 0h64m46 0h44m1 0h13m-597 300h760m-759.5-598.5v598m224-14v2m1-6v4m1-8v4m1-8v1m0 1v2m1-8v4m1-8v4m1-7v3m1-7v4m1-8v4m1-8v4m1-8v4m1-8v4m1-7v3m1-7v4m1-8v4m1-8v3m1-7v4m1-7v3m1-7v4m1-6v1m1-5v2m1-5v1m1-5v1m2-8v1m2-12v1m1-5v4m1-8v4m1-7v3m1-7v4m1-8v4m1-8v4m1-8v4m1-8v4m1-7v3m1-7v4m1-8v4m1-8v4m1-8v4m1-7v3m1-7v4m1-8v4m1-8v2m0 1v1m1-8v2m1-6v4m1-7v3m1-7v4m1-8v4m1-8v2m0 1v1m1-8v4m1-8v4m1-7v3m1-7v2m0 1v1m1-8v4m1-8v4m1-8v4m1-8v4m1-7v3m1-7v4m1-8v4m1-8v4m1-8v4m1-7v3m1-7v4m1-8v4m1-8v4m1-8v4m1-8v4m1-7v3m1-7v4m1-8v4m1-8v4m1-8v4m1-8v4m1-7v1m0 1v1m1-7v4m1-8v4m1-8v4m1-8v4m1-8v4m1-7v3m1-7v4m1-8v4m1-8v4m1-8v4m1-8v4m1-7v3m1-7v4m1-8v4m1-8v4m1-8v4m1-7v3m1-7v4m1-8v4m1-8v4m1-8v4m1-8v4m1-7v3m1-7v4m1-8v4m1-8v4m1-8v4m1-8v4m1-7v3m1-7v4m1-8v4m1-8v4m1-8v4m1-8v4m1-7v3m1-6v3m1-8v4m1-8v2m0 1v1m1-7v3m1-5v1m1-5v2m1-6v2m1-8v4m1-8v4m1-8v4m1-7v3m1-7v4m1-8v4m1-5v1m2-12v1m2-8v1m1-5v1m1-5v2m1-5v1m1-6v4m1-7v3m1-7v4m1-7v3m1-8v4m1-8v4m1-7v3m1-7v4m1-8v4m1-8v4m1-8v4m1-8v4m1-7v3m1-7v4m1-8v4m1-8v2m0 1v1m1-8v4m1-8v4m1-6v2m225-13v598m160-598v598"/>
<path stroke="#7f7f7f" d="M466 138.5h2m1 3h2m-344 3h2m-4 3h2m347 0h2m3 1h2m-366 2h2m5 0h2m359 1h2m-366 2h2m352 0h2m4 1h2m4 0h2m-377 2h2m11 0h2m350 1h2m4 0h2m-369 2h2m-8 1h2m367 0h2m11 0h2m-374 2h2m-15 1h2m5 0h2m372 0h2m5 1h2m-392 2h2m4 0h2m5 0h2m364 0h2m6 0h2m3 1h2m-10 1h2m-382 1h2m4 0h2m369 1h2m5 0h2m4 1h2m-388 1h2m-15 1h2m387 0h2m5 0h2m-4 1h2m-393 1h2m386 1h2m-395 1h2m6 0h2m-8 1h2m402 0h2m-397 1h2m391 0h2m-401 1h2m395 0h2m-406 1h2m7 0h2m400 0h2m-411 1h2m7 0h2m388 0h2m6 0h2m-407 1h2m393 0h2m6 0h2m-411 1h2m6 0h2m397 0h2m-407 1h2m6 0h2m393 0h2m7 0h2m-404 1h2m389 0h2m7 0h2m-409 1h2m403 0h2m-405 1h2m408 0h2m-410 1h2m396 0h2m6 0h2m-12 1h2m6 0h2m-4 1h2m-417 1h2m411 0h2m-413 1h2m407 0h2m-409 1h2m-8 1h2m6 0h2m-8 1h2m6 0h2m413 0h2m-423 1h2m6 0h2m409 0h2m-419 1h2m413 0h2m-424 1h2m7 0h2m409 0h2m7 0h2m-429 1h2m7 0h2m405 0h2m7 0h2m-425 1h2m410 0h2m7 0h2m-421 1h2m415 0h2m-427 1h2m8 0h2m411 0h2m8 0h2m-433 1h3m416 0h2m8 0h2m-428 1h3m420 0h3m-423 1h2m416 0h2m-418 1h2m412 0h2m9 0h2m-15 1h2m9 0h2m-440 1h2m433 0h3m-436 1h2m428 0h3m-431 1h2m424 0h2m-426 1h2m-9 1h2m7 0h2m-9 1h2m7 0h2m431 0h2m-442 1h2m436 0h2m-438 1h3m430 0h3m-444 1h2m9 0h2m425 0h3m-439 1h2m9 0h2m421 0h2m9 0h2m-445 1h3m427 0h2m9 0h2m-440 1h3m432 0h3m-446 1h2m9 0h2m427 0h3m-441 1h2m9 0h2m423 0h2m-436 1h3m429 0h2m10 0h2m-443 1h3m435 0h3m-438 1h2m430 0h3m-433 1h2m426 0h2m-4 1h2m8 0h3m-7 1h4m-451 1h2m442 0h3m-445 1h3m437 0h2m-439 1h4m0 1h3m-13 1h2m11 0h2m-13 1h3m452 0h2m-454 1h4m445 0h3m-448 1h3m438 0h4m-455 1h2m11 0h2m433 0h3m-449 1h3m441 0h2m11 0h2m-456 1h4m447 0h3m-450 1h3m440 0h4m-457 1h3m10 0h2m435 0h3m-450 1h4m441 0h2m11 0h2m-456 1h4m447 0h3m-450 1h3m440 0h4m-7 1h3m-5 1h2m10 0h3m-7 1h4m-8 1h4m-459 1h3m449 0h3m-452 1h4m0 1h4m0 1h3m-14 1h2m0 1h4m459 0h3m-462 1h4m451 0h4m-455 1h3m444 0h4m-462 1h2m453 0h3m-456 1h4m0 1h5m455 0h3m-458 1h2m446 0h7m-10 1h3m-460 1h4m0 1h6m458 0h3m-461 1h4m447 0h7m-10 1h3m7 2h4m-10 1h6m-10 1h4m-464 1h4m0 1h7m0 1h3m-14 2h7m0 1h7m454 0h7m-14 1h7m-468 2h6m0 1h8m454 0h7m-14 1h7m-468 2h6m0 1h8m454 0h7m-14 1h7m-6 4h14m-477 3h14m-14 4h14m449 1h14m-477 3h14m449 0h14m-477 3h14m449 1h14m-14 4h14m-477 3h14m-7 4h8m-14 1h6m455 0h7m0 1h7m-469 2h8m-14 1h6m455 0h7m0 1h7m-468 2h7m-14 1h7m454 0h7m0 1h7m-85 1h3m0 1h6m61 0h4m-65 1h4m61 0h7m0 1h3m-463 1h4m-10 1h6m-10 1h4m7 2h3m-10 1h7m447 0h4m-461 1h3m458 0h6m0 1h4m-460 1h3m-10 1h7m446 0h2m-458 1h3m455 0h4m0 1h5m-456 1h3m453 0h2m-462 1h4m444 0h3m-455 1h4m451 0h4m-461 1h2m459 0h4m0 1h2m-14 1h3m0 1h4m0 1h4m-452 1h3m449 0h3m-459 1h4m-8 1h4m-7 1h3m10 0h2m-5 1h3m-7 1h4m440 0h3m-450 1h3m447 0h4m-456 1h2m11 0h2m441 0h4m-450 1h3m435 0h2m10 0h3m-457 1h4m440 0h3m-450 1h3m447 0h4m-456 1h2m11 0h2m441 0h3m-449 1h3m433 0h2m11 0h2m-455 1h4m438 0h3m-448 1h3m445 0h4m-454 1h2m452 0h3m-13 1h2m11 0h2m-13 1h3m0 1h4m-439 1h2m437 0h3m-445 1h3m-7 1h4m-7 1h3m8 0h2m-4 1h2m426 0h2m-433 1h3m430 0h2m-438 1h3m435 0h3m-443 1h2m10 0h2m429 0h3m-436 1h2m423 0h2m9 0h2m-441 1h3m427 0h2m9 0h2m-446 1h3m432 0h3m-440 1h2m9 0h2m427 0h3m-445 1h2m9 0h2m421 0h2m9 0h2m-439 1h3m425 0h2m9 0h2m-444 1h3m430 0h2m-437 1h2m435 0h3m-9 1h2m7 0h2m-9 1h2m7 0h2m-9 1h2m-426 1h2m424 0h2m-431 1h3m428 0h2m-436 1h3m-5 1h2m9 0h2m-4 1h2m412 0h2m-419 1h3m416 0h2m-423 1h2m7 0h2m412 0h3m-428 1h2m7 0h2m417 0h3m-424 1h2m412 0h2m8 0h2m-428 1h2m416 0h2m-422 1h2m8 0h2m410 0h2m-426 1h2m8 0h2m414 0h2m-420 1h2m408 0h2m8 0h2m-424 1h2m412 0h2m-418 1h2m416 0h2m-422 1h2m412 0h2m6 0h2m-8 1h2m6 0h2m-413 1h2m403 0h2m-409 1h2m407 0h2m-413 1h2m411 0h2m-417 1h2m415 0h2m-421 1h2m7 0h2m-13 1h2m7 0h2m396 0h2m-402 1h2m400 0h2m-397 1h2m-12 1h2m6 0h2m398 0h2m-412 1h2m6 0h2m393 0h2m7 0h2m-408 1h2m397 0h2m7 0h2m-412 1h2m7 0h2m392 0h2m-407 1h2m7 0h2m388 0h2m6 0h2m-402 1h2m392 0h2m6 0h2m0 1h2m-409 1h2m391 0h2m5 0h2m-404 1h2m402 0h2m-8 1h2m6 0h2m-395 1h2m386 1h2m-393 1h2m-4 1h2m5 0h2m387 0h2m-15 1h2m-388 1h2m4 1h2m5 0h2m369 1h2m4 0h2m-382 1h2m-10 1h2m3 1h2m6 0h2m364 0h2m5 0h2m4 0h2m-392 2h2m5 1h2m372 0h2m5 0h2m-15 1h2m-374 2h2m11 0h2m367 0h2m-8 1h2m-369 2h2m4 0h2m350 1h2m11 0h2m-377 2h2m4 0h2m4 1h2m352 0h2m-366 2h2m366 1h2m-8 1h2m-360 1h2m4 0h2m347 2h2m-4 3h2m-344 1h2m1 3h2m-60.5-87.5v1m1 3v1m3 7v1m3 6v1m2-190v1m0 192v1m1 3v1m1-202v1m1-5v1m0 208v1m2-213v1m3 23v1m1-33v1m0 202v1m1 30v1m1-238v1m2-5v1m0 27v1m0 206v1m1-226v1m3 231v1m0 9v1m1-255v1m0 4v1m2 227v1m0 18v1m1-251v1m1 253v1m1-264v1m0 261v1m1-262v1m0 9v1m0 235v1m0 18v1m1-275v1m0 4v1m0 18v1m0 239v1m1-259v1m0 261v1m1-258v1m0 9v1m0 245v1m0 4v1m0 5v1m1-277v1m0 9v1m0 249v1m0 14v1m1-275v1m0 4v1m0 277v1m1-289v1m0 10v1m0 255v1m0 4v1m1-272v1m0 14v1m0 260v1m1-286v1m0 14v1m0 268v1m0 9v1m1-279v1m0 4v1m0 256v1m0 14v1m1-283v1m0 285v1m1-296v1m0 9v1m0 269v1m0 13v1m0 5v1m1-306v1m0 5v1m0 14v1m0 272v1m1-294v1m0 291v1m1-298v1m0 5v1m0 14v1m0 279v1m0 5v1m0 4v1m1-312v1m0 5v1m0 4v1m0 287v1m0 5v1m0 4v1m1-310v1m0 10v1m0 281v1m0 9v1m0 4v1m1-313v1m0 4v1m0 300v1m0 4v1m1-311v1m0 4v1m0 4v1m0 288v1m1-299v1m0 9v1m0 4v1m0 223v1m0 78v1m1-318v1m0 9v1m0 290v1m0 4v1m0 9v1m1-312v1m0 5v1m0 225v1m0 62v1m0 4v1m0 9v1m0 5v1m1-332v1m0 15v1m0 297v1m0 9v1m0 5v1m1-330v1m0 10v1m0 4v1m0 228v1m0 66v1m0 15v1m1-328v1m0 10v1m0 4v1m0 309v1m0 5v1m1-338v1m0 5v1m0 10v1m0 230v1m0 76v1m0 4v1m0 5v1m1-336v1m0 5v1m0 10v1m0 305v1m0 10v1m1-334v1m0 5v1m0 238v1m0 75v1m0 10v1m0 5v1m1-344v1m0 5v1m0 5v1m0 312v1m0 5v1m0 4v1m0 5v1m1-342v1m0 5v1m0 5v1m0 235v1m0 80v1m0 4v1m0 5v1m1-340v1m0 5v1m0 5v1m0 314v1m0 4v1m0 5v1m1-338v1m0 5v1m0 5v1m0 232v1m0 79v1m0 4v1m0 5v1m1-342v1m0 5v1m0 5v1m0 5v1m0 315v1m0 5v1m1-340v1m0 5v2m0 4v1m0 235v1m0 83v1m0 5v1m1-338v1m0 6v1m0 4v1m0 317v1m0 5v1m0 11v1m1-348v1m0 6v1m0 4v1m0 232v1m0 88v1m0 11v1m1-346v2m0 5v1m0 324v1m0 11v1m0 4v1m1-348v1m0 5v1m0 46v1m0 187v1m0 87v1m0 10v2m0 4v1m1-358v1m0 11v1m0 337v1m0 5v1m1-356v1m0 11v1m0 51v1m0 185v1m0 97v1m0 5v1m1-354v1m0 11v1m0 333v1m0 4v2m0 5v1m1-364v1m0 5v1m0 63v1m0 182v1m0 96v1m0 4v1m0 6v1m1-362v2m0 4v2m0 340v1m0 4v1m0 6v1m1-359v1m0 5v1m0 61v1m0 180v1m0 100v1m0 5v2m0 6v1m1-364v1m0 5v1m0 341v1m0 5v1m0 6v2m1-370v2m0 6v1m0 5v1m0 61v1m0 177v1m0 99v1m0 5v1m0 6v1m1-366v1m0 6v1m0 5v1m0 343v1m0 6v1m1-370v1m0 5v1m0 6v2m0 65v1m0 175v1m0 104v1m0 5v2m1-368v2m0 4v2m0 6v1m0 344v1m0 5v1m1-364v1m0 5v1m0 6v1m0 65v1m0 172v1m0 109v1m1-362v1m0 5v1m0 352v2m0 11v2m1-373v2m0 4v2m0 70v1m0 171v1m0 106v1m0 12v1m1-369v1m0 5v1m0 360v1m1-367v1m0 76v1m0 168v1m0 117v2m0 6v1m1-385v2m0 11v2m0 360v1m0 6v2m1-382v1m0 12v1m0 74v1m0 166v1m0 116v1m0 6v1m1-379v1m0 368v2m0 6v1m1-377v2m0 86v1m0 163v1m0 114v1m0 6v2m0 5v2m1-390v2m0 7v1m0 370v1m0 6v1m1-386v1m0 7v1m0 85v1m0 161v1m0 120v1m0 6v1m1-384v2m0 6v2m0 364v2m0 5v2m0 4v2m1-394v2m0 5v1m0 7v1m0 84v1m0 158v1m0 118v1m0 6v1m0 5v1m1-390v1m0 5v2m0 374v1m0 5v1m1-388v1m0 6v1m0 90v1m0 156v1m0 123v2m0 4v2m1-393v1m0 6v2m0 5v2m0 368v1m0 5v1m1-390v2m0 6v1m0 96v1m0 153v1m0 128v1m1-387v1m0 6v1m0 335v1m0 40v2m1-385v2m0 5v2m0 94v1m0 151v1m0 126v1m0 13v2m1-396v2m0 5v1m0 330v1m0 54v1m1-392v1m0 100v1m0 148v1m0 83v1m0 54v2m1-390v2m0 385v1m0 7v1m1-394v1m0 98v1m0 146v1m0 82v1m0 53v2m0 6v2m1-408v2m0 395v1m0 6v2m1-404v2m0 112v1m0 143v1m0 81v1m0 52v2m0 5v2m1-400v1m0 389v1m0 6v1m0 7v2m1-414v1m0 7v2m0 110v1m0 141v1m0 80v1m0 58v2m0 6v2m1-411v2m0 7v2m0 329v1m0 58v2m0 6v2m1-407v2m0 7v2m0 107v1m0 139v1m0 137v1m0 6v2m0 7v1m1-411v2m0 7v1m0 324v1m0 64v2m0 7v2m1-416v2m0 6v2m0 114v1m0 136v1m0 141v2m0 7v2m1-412v2m0 6v2m0 326v1m0 63v1m0 7v2m1-408v1m0 7v2m0 111v1m0 134v1m0 148v1m1-413v1m0 7v2m0 329v1m0 70v2m1-411v2m0 7v2m0 118v1m0 132v1m0 73v1m0 70v2m1-407v2m0 7v2m1-9v2m0 7v1m0 116v1m0 130v1m0 72v1m0 86v2m1-417v2m0 411v2m1-413v2m0 122v1m0 127v1m0 71v1m0 84v2m1-409v2m0 403v2m0 6v2m1-429v1m0 136v1m0 125v1m0 70v1m0 82v2m0 6v2m1-426v2m0 329v1m0 82v2m0 6v2m1-422v2m0 134v1m0 122v1m0 151v1m0 6v2m1-418v2m0 323v1m0 88v2m0 8v1m1-432v1m0 8v2m0 131v1m0 120v1m0 155v2m0 8v2m1-430v2m0 8v2m0 317v1m0 87v1m0 8v2m1-426v2m0 8v2m0 129v1m0 117v1m0 162v2m1-422v2m0 321v1m0 94v2m0 8v1m1-436v2m0 7v2m0 136v1m0 115v1m0 64v1m0 94v2m0 8v2m1-433v2m0 7v2m0 409v1m0 7v3m1-429v2m0 7v2m0 134v1m0 112v1m0 164v3m1-424v3m0 416v2m1-429v2m0 9v2m0 139v1m0 110v1m0 62v1m0 98v2m1-425v2m0 9v2m1-11v3m0 147v1m0 107v1m0 61v1m0 115v2m1-435v3m0 312v1m0 115v2m1-430v2m0 143v1m0 105v1m0 174v2m1-426v1m0 307v1m0 113v2m1-279v1m0 102v1m0 171v2m0 7v2m1-446v2m0 431v2m0 7v2m1-442v2m0 157v1m0 100v1m0 56v1m0 112v1m0 6v3m1-438v3m0 430v2m1-432v3m0 153v1m0 97v1m0 55v1m0 117v2m0 9v2m1-449v2m0 9v2m0 421v2m0 9v2m1-445v2m0 9v2m0 150v1m0 95v1m0 54v1m0 125v3m1-441v3m0 432v3m1-435v3m0 157v1m0 93v1m0 52v1m0 122v2m0 9v2m1-451v1m0 10v2m0 300v1m0 122v2m0 9v2m1-448v2m0 10v2m0 154v1m0 91v1m0 182v3m1-444v3m0 305v1m0 129v3m1-438v3m0 161v1m0 89v1m0 178v2m1-442v1m0 9v2m0 298v1m0 127v2m1-439v3m0 8v2m0 159v1m0 86v1m1-257v4m0 300v1m1-301v3m0 163v1m0 84v1m0 46v1m0 146v2m1-444v2m0 437v3m1-277v1m0 81v1m0 45v1m0 141v4m1-7v3m1-269v1m0 79v1m0 44v1m0 138v2m0 11v2m1-459v2m0 452v3m1-455v3m0 177v1m0 76v1m0 43v1m0 146v4m1-449v4m0 292v1m0 145v3m1-441v3m0 171v1m0 74v1m0 186v2m0 11v2m1-461v2m0 11v2m0 285v1m0 155v3m1-457v3m0 181v1m0 71v1m0 193v4m1-451v4m0 289v1m0 150v3m1-443v3m0 175v1m0 69v1m0 189v2m0 10v3m1-463v2m0 11v2m0 282v1m0 158v4m1-458v3m0 42v1m0 142v1m0 66v1m0 37v1m0 156v4m1-451v4m0 40v1m0 399v3m1-443v3m0 39v1m0 1v1m0 137v1m0 64v1m0 36v1m1-295v3m0 10v2m0 41v1m0 1v1m1-56v4m0 53v1m0 133v1m0 61v1m0 35v1m1-286v4m0 51v1m0 1v1m1-54v3m0 52v1m0 1v1m0 126v1m0 59v1m0 34v1m0 172v3m1-396v1m0 217v1m0 170v4m1-391v1m0 1v1m0 122v1m0 56v1m0 200v4m1-383v1m0 1v1m0 207v1m0 165v3m1-375v1m0 117v1m0 55v1m0 209v2m1-468v3m0 81v1m0 1v1m0 199v1m0 175v4m1-463v4m0 81v1m0 1v1m0 111v1m0 52v1m0 202v4m1-455v4m0 81v1m0 191v1m0 170v3m1-447v3m0 80v1m0 1v1m0 106v1m0 50v1m0 27v1m0 184v2m1-371v1m0 1v1m0 361v5m1-467v3m0 99v1m0 102v1m0 47v1m0 26v1m0 177v4m1-459v7m0 94v1m0 1v1m0 349v2m1-448v3m0 95v1m0 1v1m0 95v1m0 45v1m0 25v1m1-167v1m0 163v1m0 189v4m1-471v3m0 112v1m0 1v1m0 90v1m0 43v1m0 208v6m1-464v7m0 109v1m0 1v1m0 153v1m0 181v4m1-451v3m0 110v1m0 86v1m0 40v1m1-127v1m0 1v1m0 145v1m1-275v4m0 126v1m0 81v1m0 38v1m1-248v6m0 122v1m0 139v1m1-263v4m0 122v1m0 1v1m0 75v1m0 35v1m0 19v1m1-131v1m0 329v4m1-332v1m0 1v1m0 70v1m0 33v1m0 18v1m0 194v7m1-324v1m0 1v1m0 311v3m1-313v1m0 66v1m0 30v1m0 17v1m1-115v1m0 1v1m0 312v7m1-475v7m0 150v1m0 1v1m0 59v1m0 28v1m0 16v1m0 195v7m1-461v7m0 147v1m0 101v1m1-101v1m0 1v1m0 55v1m0 25v1m1-81v1m0 1v1m0 91v1m0 206v7m1-475v6m0 165v1m0 50v1m0 23v1m0 214v7m1-462v8m0 159v1m0 1v1m0 83v1m1-83v1m0 1v1m0 44v1m0 20v1m1-65v1m0 75v1m0 210v7m1-475v6m0 177v1m0 1v1m0 39v1m0 18v1m0 10v1m0 205v7m1-462v8m0 173v1m0 1v1m1 1v1m0 35v1m0 16v1m0 8v1m1-61v1m0 1v1m1 1v1m0 1v1m0 28v1m0 14v1m0 7v1m1-253v14m0 188v1m1 1v1m0 1v1m0 24v1m0 11v1m0 6v1m1-43v1m0 39v1m1-39v1m0 1v1m0 19v1m0 9v1m0 220v14m1-263v1m0 1v1m0 29v1m1-29v1m0 15v1m0 6v1m1-22v1m0 1v1m0 21v1m1-21v1m0 1v1m0 8v1m0 4v1m0 222v14m1-477v14m0 214v1m0 13v1m1-13v1m0 1v1m0 4v1m0 1v2m1-7v1m0 1v1m1-237v14m0 224v1m0 224v14m1-237v1m0 1v1m1-7v2m0 1v1m0 4v1m0 1v1m1-13v1m0 13v1m0 214v14m1-477v14m0 222v1m0 4v1m0 8v1m0 1v1m1-21v1m0 21v1m0 1v1m1-22v1m0 6v1m0 15v1m1-29v1m0 29v1m0 1v1m1-263v14m0 63v7m0 150v1m0 9v1m0 19v1m0 1v1m1-196v6m0 151v1m0 39v1m1-43v1m0 6v1m0 11v1m0 24v1m0 1v1m1 1v1m0 188v14m1-253v1m0 7v1m0 14v1m0 28v1m0 1v1m1 1v1m0 1v1m1-61v1m0 8v1m0 16v1m0 35v1m1 1v1m0 1v1m0 173v7m1-462v8m0 205v1m0 10v1m0 18v1m0 39v1m0 1v1m0 176v7m1-475v6m0 211v1m0 75v1m1-65v1m0 20v1m0 44v1m0 1v1m1-83v1m0 83v1m0 1v1m0 159v7m1-462v8m0 214v1m0 23v1m0 50v1m0 164v7m1-475v6m0 207v1m0 91v1m0 1v1m1-81v1m0 25v1m0 55v1m0 1v1m1-101v1m0 101v1m0 147v7m1-461v7m0 195v1m0 16v1m0 28v1m0 59v1m0 1v1m0 150v7m1-475v7m0 312v1m0 1v1m1-115v1m0 17v1m0 30v1m0 66v1m1-313v4m0 310v1m0 1v1m1-324v7m0 194v1m0 18v1m0 33v1m0 70v1m0 1v1m1-331v3m0 329v1m1-131v1m0 19v1m0 35v1m0 77v1m0 122v4m1-263v1m0 137v1m0 1v1m0 122v6m1-248v1m0 38v1m0 81v1m0 126v4m1-275v1m0 147v1m1-127v1m0 40v1m0 86v1m0 110v3m1-451v4m0 181v1m0 153v1m0 1v1m0 109v7m1-464v6m0 208v1m0 43v1m0 90v1m0 1v1m0 112v3m1-471v4m0 189v1m0 163v1m1-167v1m0 25v1m0 45v1m0 95v1m0 1v1m0 95v3m1-448v2m0 349v1m0 1v1m0 94v7m1-460v5m0 177v1m0 26v1m0 47v1m0 102v1m0 99v3m1-467v4m0 362v1m0 1v1m1-371v2m0 184v1m0 27v1m0 50v1m0 106v1m0 1v1m0 80v3m1-447v3m0 170v1m0 191v1m0 81v4m1-455v4m0 202v1m0 52v1m0 111v1m0 1v1m0 81v4m1-463v4m0 175v1m0 199v1m0 83v2m1-467v2m0 209v1m0 55v1m1-257v3m0 165v1m0 209v1m1-383v4m0 200v1m0 56v1m0 124v1m1-391v4m0 170v1m0 217v1m1-396v3m0 172v1m0 34v1m0 59v1m0 126v1m0 54v3m1-52v1m0 51v4m1-286v1m0 35v1m0 61v1m0 187v4m1-56v1m0 43v2m0 10v3m1-295v1m0 36v1m0 64v1m0 137v1m0 1v1m0 39v3m1-443v3m0 399v1m0 40v4m1-451v4m0 156v1m0 37v1m0 66v1m0 142v1m0 42v3m1-458v4m0 158v1m0 282v2m0 11v2m1-463v3m0 10v2m0 189v1m0 69v1m0 175v3m1-443v3m0 150v1m0 289v4m1-451v4m0 193v1m0 71v1m0 181v3m1-457v3m0 155v1m0 285v2m0 11v2m1-461v2m0 11v2m0 186v1m0 74v1m0 171v3m1-441v3m0 145v1m0 292v4m1-449v4m0 146v1m0 43v1m0 76v1m0 177v3m1-455v3m0 452v2m1-459v2m0 11v2m0 138v1m0 44v1m0 79v1m1-269v3m1-7v4m0 141v1m0 45v1m0 81v1m1-277v3m0 437v2m1-443v1m0 146v1m0 46v1m0 84v1m0 163v3m1-301v1m0 300v4m1-257v1m0 86v1m0 159v2m0 8v3m1-439v2m0 127v1m0 298v2m0 9v1m1-442v2m0 178v1m0 89v1m0 161v3m1-438v3m0 129v1m0 305v3m1-444v3m0 182v1m0 91v1m0 154v2m0 10v2m1-448v2m0 9v2m0 122v1m0 300v2m0 10v1m1-451v2m0 9v2m0 122v1m0 52v1m0 94v1m0 156v3m1-435v3m0 432v3m1-441v3m0 125v1m0 54v1m0 95v1m0 150v2m0 9v2m1-445v2m0 9v2m0 421v2m0 9v2m1-449v2m0 9v2m0 117v1m0 55v1m0 97v1m0 153v3m1-433v3m0 430v3m1-438v2m0 7v1m0 112v1m0 56v1m0 100v1m0 157v2m1-442v2m0 7v2m0 111v1m0 319v1m1-445v2m0 7v2m0 171v1m0 102v1m1-279v2m0 113v1m0 307v1m1-426v2m0 174v1m0 105v1m0 143v2m1-430v2m0 115v1m0 312v3m1-434v1m0 115v1m0 61v1m0 107v1m0 147v3m1-11v2m0 9v2m1-425v2m0 98v1m0 62v1m0 110v1m0 139v2m0 9v1m1-428v2m0 416v2m1-423v3m0 100v1m0 63v1m0 112v1m0 134v1m0 7v3m1-429v3m0 7v1m0 408v2m0 8v2m1-433v2m0 8v2m0 94v1m0 64v1m0 115v1m0 135v2m0 8v1m1-435v1m0 8v2m0 94v1m0 320v2m1-421v2m0 162v1m0 117v1m0 129v2m0 7v2m1-425v2m0 7v2m0 87v1m0 317v2m0 7v2m1-429v2m0 7v2m0 156v1m0 120v1m0 131v2m0 7v2m1-432v1m0 7v2m0 89v1m0 323v2m1-419v2m0 6v2m0 151v1m0 257v2m1-423v2m0 6v2m0 83v1m0 329v2m1-427v2m0 6v2m0 83v1m0 70v1m0 125v1m0 136v1m1-422v2m0 404v1m1-409v2m0 85v1m0 71v1m0 127v1m0 121v2m1-413v2m0 411v2m1-416v1m0 87v1m0 72v1m0 130v1m0 116v1m0 6v2m1-8v2m0 6v2m1-406v2m0 70v1m0 73v1m0 132v1m0 118v2m0 6v2m1-410v2m0 70v1m0 329v1m0 7v1m1-413v2m0 148v1m0 134v1m0 111v1m0 7v2m1-408v1m0 7v2m0 63v1m0 325v2m0 7v2m1-412v2m0 6v2m0 142v1m0 136v1m0 113v2m0 7v2m1-416v2m0 6v2m0 65v1m0 324v1m0 6v2m1-410v1m0 6v2m0 7v1m0 137v1m0 139v1m0 107v2m0 6v2m1-407v2m0 7v2m0 58v1m0 329v2m0 6v2m1-411v2m0 7v2m0 58v1m0 80v1m0 141v1m0 110v1m0 7v2m1-414v1m0 7v2m0 6v1m0 388v2m1-400v1m0 6v2m0 52v1m0 81v1m0 143v1m0 112v2m1-404v2m0 6v1m0 395v2m1-408v2m0 6v2m0 53v1m0 82v1m0 146v1m0 98v1m1-394v1m0 7v1m0 385v2m1-390v2m0 54v1m0 83v1m0 148v1m0 100v1m1-392v1m0 54v1m0 330v1m0 5v2m1-396v2m0 13v1m0 126v1m0 151v1m0 94v2m0 5v2m1-385v2m0 40v1m0 335v1m0 6v1m1-387v1m0 128v1m0 153v1m0 89v1m0 6v1m0 6v2m1-390v1m0 5v1m0 368v2m0 5v2m0 6v1m1-393v2m0 4v2m0 123v1m0 156v1m0 90v1m0 6v1m1-388v1m0 5v1m0 374v2m0 5v1m1-390v1m0 5v1m0 6v1m0 118v1m0 158v1m0 84v1m0 7v1m0 5v2m1-394v2m0 4v2m0 5v2m0 364v2m0 6v2m1-384v1m0 6v1m0 120v1m0 161v1m0 85v1m0 7v1m1-386v1m0 6v1m0 370v1m0 7v2m1-390v2m0 5v2m0 6v1m0 114v1m0 163v1m0 86v2m1-377v1m0 6v2m0 368v1m1-379v1m0 6v1m0 116v1m0 166v1m0 74v1m0 12v1m1-382v2m0 6v1m0 360v2m0 11v2m1-385v1m0 6v2m0 117v1m0 168v1m0 76v1m1-367v1m0 360v1m0 5v1m1-369v1m0 12v1m0 106v1m0 171v1m0 70v2m0 4v2m1-373v2m0 11v2m0 352v1m0 5v1m1-362v1m0 109v1m0 172v1m0 65v1m0 6v1m0 5v1m1-364v1m0 5v1m0 344v1m0 6v2m0 4v2m1-368v2m0 5v1m0 104v1m0 175v1m0 65v2m0 6v1m0 5v1m1-370v1m0 6v1m0 343v1m0 5v1m0 6v1m1-366v1m0 6v1m0 5v1m0 99v1m0 177v1m0 61v1m0 5v1m0 6v2m1-370v2m0 5v2m0 5v1m0 341v1m0 5v1m1-357v1m0 6v1m0 100v1m0 180v1m0 61v1m0 5v1m1-359v1m0 6v1m0 4v1m0 340v1m0 5v2m1-362v1m0 5v2m0 4v1m0 96v1m0 182v1m0 62v2m0 5v1m1-364v1m0 5v1m0 5v1m0 333v1m0 11v1m1-354v1m0 5v1m0 97v1m0 185v1m0 51v1m0 11v1m1-356v1m0 4v2m0 337v1m0 11v1m1-358v1m0 4v1m0 11v1m0 87v1m0 187v1m0 46v1m0 5v1m1-348v1m0 4v1m0 11v1m0 324v1m0 5v1m1-345v1m0 11v1m0 88v1m0 232v1m0 4v1m0 5v2m1-348v1m0 11v1m0 5v1m0 317v1m0 4v1m0 6v1m1-338v1m0 5v1m0 83v1m0 235v1m0 4v1m0 6v1m1-340v1m0 5v1m0 315v1m0 5v1m0 4v2m0 5v1m1-342v1m0 5v1m0 4v1m0 79v1m0 232v1m0 5v1m0 5v1m1-338v1m0 5v1m0 4v1m0 314v1m0 5v1m0 5v1m1-340v1m0 5v1m0 4v1m0 80v1m0 235v1m0 5v1m0 5v1m1-342v1m0 5v1m0 4v1m0 5v1m0 312v1m0 5v1m0 5v1m1-344v1m0 5v1m0 4v1m0 5v1m0 75v1m0 238v1m0 5v1m1-334v1m0 10v1m0 305v1m0 10v1m0 5v1m1-336v1m0 10v1m0 76v1m0 230v1m0 10v1m0 5v1m1-338v1m0 5v1m0 4v1m0 304v1m0 4v1m0 10v1m1-328v1m0 15v1m0 66v1m0 228v1m0 4v1m0 10v1m1-330v1m0 15v1m0 297v1m0 4v1m0 10v1m1-332v1m0 5v1m0 9v1m0 4v1m0 62v1m0 225v1m0 5v1m1-312v1m0 9v1m0 4v1m0 290v1m0 5v1m1-314v1m0 9v1m0 68v1m0 223v1m0 4v1m0 9v1m1-299v1m0 288v1m0 9v1m1-306v1m0 295v1m0 4v1m0 4v1m1-313v1m0 4v1m0 9v1m0 281v1m0 10v1m1-310v1m0 4v1m0 5v1m0 287v1m0 10v1m1-312v1m0 4v1m0 5v1m0 279v1m0 14v1m0 5v1m1-298v1m0 291v1m1-294v1m0 272v1m0 14v1m0 5v1m1-306v1m0 5v1m0 13v1m0 269v1m0 9v1m1-296v1m0 285v1m1-283v1m0 271v1m0 4v1m1-279v1m0 9v1m0 268v1m1-271v1m0 260v1m0 14v1m1-272v1m0 4v1m0 255v1m0 10v1m1-289v1m0 277v1m0 4v1m1-275v1m0 14v1m0 249v1m0 9v1m1-277v1m0 5v1m0 4v1m0 245v1m0 9v1m1-258v1m0 261v1m1-259v1m0 239v1m0 18v1m0 4v1m1-275v1m0 18v1m0 235v1m0 9v1m1-262v1m0 242v1m0 18v1m1-264v1m0 18v1m1 234v1m1-251v1m0 18v1m0 226v1m1-238v1m1 12v1m0 229v1m1-255v1m0 230v1m1 9v1m1-224v1m0 209v1m2-194v1m0 188v1m0 27v1m4-211v1m0 202v1m1-33v1m4 20v1m1-210v1m1 204v1m2-5v1m3-8v1m5-168v1m1 3v1m1 142v1"/>
<path stroke="#ff0000" d="M136 81.5h3m7 0h3m597 26h6m-6 6h6m-3 35h3m-2 38h2m-8 1h2m2 0h2m0 2h2m-5 47h3m-5 1h2m3 0h2m-7 6h2m3 0h2m-5 1h3m-187 16h5m-2 1h2m182 15h3m-2 1h2m-7 2h2m-2 5h2m-3 3h2m-2 6h8m-379 82h2m-5 4h2m28 15h7m-19 1h6m-35 3h3m-107 8h3m169 5h3m-261 7h5m-7 1h3m3 0h3m-10 1h2m7 0h2m-13 2h2m11 0h2m248 1h15m-279 1h2m13 0h2m-17 4h2m13 0h2m-16 2h2m11 0h2m10 1h5m-28 1h2m7 0h2m15 0h2m-27 1h3m3 0h3m-7 1h5m6 3h5m-6 1h2m3 0h3m-9 1h2m5 0h2m-10 1h2m7 0h2m-11 4h2m7 0h2m-10 1h2m5 0h2m-8 1h2m3 0h2m-6 1h5m8 85h5m-64.5-449.5v3m1-4v1m0 3v1m1 0v1m3-6v1m1 0v3m1 0v4m1 0v8m1-12v4m1-7v3m1-4v1m3 4v1m1-6v1m0 3v1m0 212v1m1-217v3m6 214v1m2 1v1m2 1v1m2 1v1m2-52v1m0 52v1m0 116v3m1-118v1m0 112v1m0 5v1m1-176v1m0 166v1m0 9v1m1-120v1m1-60v1m1 60v1m1-63v1m1 63v1m1-67v1m0 175v1m1-109v1m1-70v1m1 70v1m1-73v1m1 73v1m1-76v1m0 173v1m0 9v1m0 9v3m1-21v1m0 5v1m1-184v1m0 178v3m1-102v1m1-82v1m1 82v1m1-85v1m0 85v1m2-88v1m0 88v1m2-91v1m0 91v1m0 102v1m0 3v3m0 100v1m1-109v1m0 108v1m1-306v1m0 95v1m0 98v1m0 100v5m0 5v1m1-113v1m0 100v1m0 5v1m0 3v1m1-307v1m0 98v1m0 94v1m0 100v1m0 7v3m1-12v1m1-296v1m0 101v1m0 65v1m0 26v3m2-199v1m0 104v1m2-107v1m0 107v1m1 188v1m1-299v1m0 110v1m0 187v1m0 7v3m1-143v1m0 132v1m0 5v1m0 3v1m1-312v1m0 113v1m0 187v5m0 5v1m1-145v1m0 144v1m1-315v1m0 116v1m0 197v1m1-197v1m0 49v1m0 12v1m1-184v1m1 121v1m0 47v1m1-173v1m1 125v1m0 45v1m1-174v1m0 180v1m1-53v1m0 43v1m1-175v1m0 181v1m1-51v1m0 40v1m1-175v1m0 182v1m1-49v1m0 38v1m1-176v1m0 182v1m1-46v1m0 36v1m1-177v1m0 183v1m1-44v1m0 34v1m1-178v1m0 184v1m1-42v1m0 32v1m1-179v1m0 185v1m1-40v1m0 30v1m1-180v1m0 149v1m0 36v1m1-9v1m1-182v1m0 153v1m0 34v1m1-9v1m1-183v1m0 156v1m0 31v1m1-8v1m1-184v1m0 159v1m0 29v1m1-8v1m1-185v1m0 162v1m0 27v1m1-8v1m1-186v1m0 165v1m0 25v1m1-8v1m1-187v1m0 168v1m0 23v1m1-8v1m1-188v1m0 171v1m0 21v1m1-9v1m1-188v1m0 174v1m0 18v1m1-8v1m1-189v1m0 177v1m0 16v1m1-16v1m0 7v1m1-191v1m0 196v1m1-14v1m0 5v1m1-192v1m0 197v1m1-12v1m0 3v1m1-193v1m0 198v1m1-10v1m0 1v1m1-194v1m0 199v1m1-8v1m1-195v1m0 199v1m1-7v1m0 1v1m1-198v1m0 200v1m1-7v1m0 3v1m1-201v1m1 195v1m1-198v1m1 196v1m0 7v1m1-207v1m0 203v1m1-7v1m0 9v1m1-210v1m0 204v1m0 5v1m1-13v1m1-202v1m0 205v1m0 8v1m1-16v1m1-202v1m0 206v1m0 10v1m1-18v1m1-203v1m0 207v1m0 12v1m1-20v1m1-204v1m0 208v1m0 14v1m1-22v1m1-205v1m0 209v1m1-7v1m1-206v1m0 210v1m0 18v1m1-26v1m1-207v1m0 211v1m0 20v1m1-28v1m1-208v1m0 211v1m0 23v1m1-30v1m1-209v1m0 212v1m0 25v1m1-32v1m0 32v1m1-244v1m0 214v1m1-6v1m0 34v1m1-247v1m0 215v1m1-6v1m0 36v1m1-250v1m0 216v1m1-6v1m0 38v1m1-253v1m0 217v1m1-6v1m0 40v1m1-256v1m0 217v1m1-6v1m0 43v1m1-259v1m0 218v1m1-6v1m1-216v1m0 219v1m1-6v1m0 40v1m1-258v1m0 220v1m1-6v1m1-218v1m0 221v1m1-6v1m0 37v1m1-258v1m0 223v1m1-6v1m1-221v1m0 223v1m1-5v1m0 33v1m1-256v1m0 224v1m1-5v1m1-223v1m0 225v1m1-5v1m0 30v1m1-255v1m0 226v1m1-5v1m1-225v1m0 227v1m1-5v1m0 27v1m1-254v1m0 228v1m1-5v1m1-227v1m0 228v1m1-4v1m0 24v1m1-253v1m0 229v1m1-5v1m1-229v1m0 231v1m1-5v1m0 22v1m1-253v1m0 232v1m1-5v1m1-231v1m0 233v1m1-5v1m0 19v1m1-252v1m0 234v1m1-5v1m1-233v1m0 235v1m1-5v1m0 15v1m1-250v1m0 235v1m1-4v1m1-235v1m0 236v1m1-4v1m0 12v1m1-249v1m0 237v1m1-4v1m1-237v1m0 238v1m1-4v1m0 9v1m1-247v1m0 238v1m1-4v1m1-234v1m0 235v1m1-4v1m0 6v1m1-238v1m0 231v1m1-3v1m1-228v1m0 228v1m0 34v2m1-263v1m0 222v1m0 4v1m0 30v2m1-35v1m0 30v2m1-256v1m0 219v1m0 31v2m1-31v1m0 27v1m1-249v1m0 216v1m0 1v1m0 25v2m1-27v1m0 23v1m1-242v1m0 213v1m0 24v2m1-24v1m0 19v2m1-236v1m0 208v1m0 1v1m0 20v2m1-21v1m0 16v2m1-229v1m0 207v1m0 16v2m1-17v1m0 12v2m1-222v1m0 199v1m0 4v1m0 13v1m1-13v1m0 9v2m1-216v1m0 201v1m0 9v2m1-10v1m0 5v2m1-209v1m0 190v1m0 7v1m0 5v2m1-4v2m1-202v1m0 195v1m0 2v1m1-3v1m1-195v1m0 181v1m0 9v2m1-4v2m0 2v1m1-192v1m0 184v2m0 3v1m1-8v2m0 6v1m1-189v1m0 172v1m0 4v2m0 7v1m1-11v1m0 10v1m1-186v1m0 171v2m0 9v1m1-14v2m0 13v1m1-183v1m0 164v2m0 13v1m1-18v1m0 18v1m1-180v1m0 157v2m0 17v1m1-22v1m0 22v1m1-177v1m0 151v1m0 21v1m1-25v2m0 23v1m1-173v1m0 144v2m0 24v1m1-29v2m0 27v1m1-170v1m0 137v2m0 5v1m0 22v1m1-33v2m0 31v1m1-167v1m0 130v2m0 32v1m1-163v1m0 126v1m0 35v1m1-39v2m0 9v1m0 25v1m1-160v1m0 119v2m0 38v1m1-43v2m0 39v1m1-157v1m0 112v2m0 42v1m1-47v2m0 14v1m0 28v1m1-154v1m0 105v2m0 46v1m1-50v1m1-103v1m0 99v2m1-4v2m0 18v1m1-116v1m0 93v1m1-4v2m1-90v1m0 85v1m1-3v2m0 22v1m0 34v1m1-141v1m0 79v1m0 60v1m1-64v2m0 60v1m1-138v1m0 72v2m0 63v1m1-68v2m0 26v1m0 37v1m1-135v1m0 65v2m0 67v1m1-72v2m1-63v1m0 58v2m1-3v1m0 31v1m1-88v1m0 52v2m1-4v2m1-50v1m0 45v2m1-4v2m0 35v1m1-79v1m0 38v2m1-4v2m1-36v1m0 32v1m1-3v2m0 39v1m0 50v1m1-121v1m0 25v2m1-4v2m1-23v1m0 18v2m1-4v2m0 44v1m1-61v1m0 12v1m1-3v2m1-10v1m0 5v2m1-4v2m1-4v2m1-4v2m0 4v1m1-9v2m1-3v1m0 11v1m0 40v1m1-56v2m1-4v2m0 17v1m1-22v2m1-4v2m0 56v1m1-61v2m0 145v2m1-151v2m0 31v1m0 114v1m1-150v1m0 145v3m1-151v2m0 37v1m0 22v1m0 80v1m0 3v1m1-150v2m0 144v3m1-151v2m0 44v1m1-49v2m1-4v2m0 51v1m0 13v1m1-70v2m1 56v1m1 93v12m0 1v2m1-106v1m0 4v1m0 84v1m1-2v1m111-134v1m1-2v1m1-10v1m0 7v1m1-8v1m0 5v1m1-6v1m0 3v1m1-4v1m0 1v1m1-2v1m1-2v1m0 1v1m1-4v1m0 3v1m1-6v1m0 5v1m1-8v1m0 7v1m1-10v1m1-2v1m1-2v1m1-2v1m2-1v3m177-119v1m0 92v3m0 39v2m1-177v1m0 7v1m0 32v7m0 32v1m0 1v3m0 47v1m0 3v1m0 37v1m0 2v1m0 8v1m1-147v1m0 44v3m0 96v2m1-184v5m0 34v7m0 34v3m0 97v2m1-144v1m0 39v1m0 53v1m0 39v1m0 2v1m1-137v1m0 1v4m0 1v1m0 33v1m0 90v1m0 1v2m1-175v5m0 40v1m0 124v1m0 8v6m0 1v1m1-148v1m0 1v4m0 1v1m0 35v1m0 3v1m0 43v1m0 3v1m0 43v1m1-181v1m0 7v1m0 72v2m0 2v3m0 45v3m0 36v1"/>
<path stroke="#ffff00" d="M747 117.5h3m-5 1h2m3 0h2m-7 2h2m3 1h2m-7 2h2m3 0h2m-5 1h3m-237 10h3m-14 1h2m5 0h2m2 5h3m234 24h2m-696 28h5m684 5h2m1 0h2m-3 1h2m1 0h2m-7 4h2m1 0h2m-3 1h2m1 0h2m-696 1h5m61 35h9m-1 4h3m-7 2h3m616 52h5m-1 2h2m-4 1h2m-414 254h2m-5 2h2m-281.5-368.5v1m0 7v5m1-12v1m0 5v1m0 5v1m1-12v1m0 3v1m0 7v1m1-12v1m0 1v1m0 9v1m6-13v1m0 1v1m0 9v1m1-14v1m0 3v1m0 7v1m1-14v1m0 5v1m0 5v1m1-14v1m0 7v5m62 36v2m0 1v5m0 1v6m3-8v1m3 4v3m1-8v1m0 3v1m0 3v1m1-8v3m0 5v1m22 0v1m43 147v1m3 2v1m3 1v1m3 2v1m3 1v1m3 2v1m3 1v1m3 1v1m102 131v1m1 0v1m1 0v13m1-14v1m1-2v1m1 0v1m1 0v13m1-14v1m1-2v1m1 0v1m1 0v3m0 1v7m0 3v1m1-4v1m0 1v1m1-12v1m0 9v1m1-2v1m0 1v1m1-14v1m0 1v9m0 3v1m1-414v1m164-19v1m2-3v1m0 1v7m1 0v1m1 0v5m1-6v1m1-6v5m1-6v1m1-4v1m0 1v1m1 0v1m1-2v1m0 1v1m1-4v1m0 3v1m2 1v1m1 0v1m0 7v1m1-16v1m0 3v1m0 3v1m0 5v1m1-14v3m0 5v5m227-30v1m0 1v2m0 33v1m0 42v1m0 4v1m1-48v7m0 34v1m0 4v1m1-48v1m0 39v1m0 4v1m1-81v2m0 34v7m0 35v1m0 4v1m0 91v1m0 1v2m0 1v3m1-148v1m1-38v2m0 36v7m0 32v1m0 4v1m1-3v1m0 4v1m0 97v2m1-107v1m0 4v1m0 97v2m0 2v1m1-186v2m0 1v1m0 39v2m0 32v1m0 4v1"/>
<path stroke="#00ff00" d="M397 51.5h2m4 0h2m-5 4h2m4 0h2m-11 6h2m4 0h2m-5 4h2m4 0h2m339 62h3m-5 1h2m3 0h2m-7 2h2m3 1h2m-7 2h2m3 0h2m-5 1h3m0 32h3m-2 1h2m-9 43h9m-6 47h3m-3 4h3m-4 2h5m-4 3h3m-3 4h3m-4 2h5m-5 37h5m-4 3h3m-310 11h2m-407 1h11m391 0h3m-5 1h2m-5 1h3m-6 1h4m-6 1h2m-5 1h3m-5 1h3m-7 1h3m-5 1h3m-6 1h3m-5 1h2m-5 1h3m-376 1h11m359 0h3m-5 1h2m-5 1h3m-6 1h3m-5 1h2m-5 1h3m-6 1h3m-5 1h2m-5 1h3m-6 1h3m-5 1h2m-5 1h3m-6 1h3m-5 1h2m-5 1h3m-6 1h3m-6 1h3m-5 1h2m-5 1h3m-6 1h3m-5 1h2m-5 1h3m-6 1h3m-5 1h2m-5 1h3m-6 1h3m-5 1h2m-5 1h3m-6 1h3m-5 1h2m-5 1h3m-6 1h3m-5 1h2m-5 1h3m-6 1h3m-5 1h2m-5 1h3m-6 1h3m-5 1h2m-5 1h3m-24 1h2m16 0h3m-5 1h2m-5 1h3m-6 1h3m-5 1h2m-5 1h3m-6 1h3m-6 1h3m-5 1h2m-5 1h3m-6 1h3m-5 1h2m-5 1h3m23 0h2m-31 1h3m-5 1h2m-5 1h3m-6 1h3m-5 1h2m-5 1h3m-6 1h3m-5 1h2m-5 1h3m-6 1h3m-5 1h2m-5 1h3m-8 2h2m-5 1h3m-6 1h3m-5 1h2m-5 1h3m-6 1h3m-5 1h2m-5 1h3m-13 35h5m-5 8h5m-7 4h9m169 1h9m-6 6h3m-3 4h3m-95 3h5m-5 8h5m-7 4h9m160 23h5m-11 6h7m3 0h7m-17 4h17m-431.5-193.5v1m0 15v1m1-16v1m0 13v1m3-13v11m6-11v11m3-13v1m0 13v1m1-16v1m0 15v1m111-38v1m2 0v1m2 0v1m2 1v1m1-47v1m1 46v1m2-45v1m0 44v1m2 0v1m1-44v1m1 43v1m2-42v1m0 42v1m3-41v1m1 41v1m2-40v1m0 39v1m2 1v1m1-40v1m1 39v1m2-38v1m0 37v1m2 0v1m1-37v1m1 36v1m2-35v1m0 35v1m2 0v1m1-35v1m1 34v1m2-33v1m0 32v1m0 116v1m0 3v5m1-8v1m0 1v1m0 5v1m1-125v1m1-33v1m1 32v1m0 72v1m0 51v3m0 1v2m2-161v1m0 30v1m1 70v1m0 42v1m0 1v1m0 5v1m1-122v1m0 111v1m0 3v5m1-150v1m1 29v1m0 67v1m1 10v1m1-107v1m0 28v1m1 64v1m1-65v1m1-28v1m1 27v1m0 61v1m2-88v1m0 25v1m1 59v1m0 27v1m1-87v1m1-26v1m1 25v1m0 55v1m2-80v1m0 23v1m1 53v1m1-54v1m0 75v1m1-99v1m1 22v1m0 50v1m2-72v1m0 21v1m0 71v1m1-25v1m1-48v1m1-21v1m1 20v1m0 44v1m0 9v1m0 12v1m2-87v1m0 18v1m1 42v1m1-42v1m0 62v1m1-82v1m1 18v1m0 38v1m2-56v1m0 16v1m0 58v1m1-23v1m1-37v1m1-16v1m1 16v1m0 32v1m0 21v1m2-70v1m0 14v1m1 30v1m1-31v1m1-14v1m1 13v1m0 27v1m2-40v1m0 11v1m0 46v1m1-22v1m1-36v1m0 10v1m2 0v1m0 21v1m0 19v1m1-52v1m1 9v1m1 19v1m1-28v1m0 7v1m0 38v1m2-38v1m0 15v1m1-24v1m1 7v1m0 33v1m1-21v1m1-20v1m0 5v1m2 0v1m0 10v1m0 18v1m1-35v1m1 4v1m1 8v1m1-12v1m0 3v1m0 24v1m2-25v1m0 5v1m1-9v1m1 2v1m0 21v1m1-19v1m1-5v2m2 18v1m2-17v1m1-3v1m1 2v2m0 11v1m1 80v5m1-103v1m0 4v1m0 91v1m0 5v1m1-96v1m1 6v1m1-17v1m0 105v3m0 1v4m1-105v1m0 2v1m1 62v1m1-77v1m0 10v1m0 87v1m0 5v1m1-6v5m1-93v1m1-14v1m1 13v2m0 4v1m2-22v1m0 16v1m1 6v1m1-11v1m0 3v1m1-20v1m1 19v1m0 7v1m2-30v1m0 14v1m0 6v1m1 9v1m1-10v1m1-25v1m1 13v1m0 11v1m0 9v1m2-38v1m0 27v1m1 11v1m1-28v1m0 15v1m1-31v1m1 30v1m0 12v1m2-46v1m0 12v1m0 20v1m1 13v1m1-14v1m1-37v1m1 12v1m0 23v1m0 14v1m2-54v1m1 55v1m1-45v1m0 28v1m1-43v1m1 42v1m0 16v1m2-62v1m0 11v1m0 32v1m1 18v1m1-19v1m1-48v1m1 10v1m0 36v1m0 19v1m2-70v1m0 50v1m1-250v1m0 269v1m1-269v1m0 1v1m0 204v1m0 40v1m1-245v1m0 1v1m0 188v1m1-188v1m0 240v1m0 21v1m1-262v1m0 1v1m1 1v1m0 179v1m0 10v1m0 44v1m1-235v1m0 1v1m1 1v1m0 1v1m0 229v1m1-229v1m0 168v1m1-168v1m0 1v1m0 174v1m0 49v1m1-224v1m0 1v1m1 1v1m0 157v1m0 61v1m1-219v1m0 1v1m1 1v1m0 160v1m0 53v1m1-214v1m0 1v1m0 146v1m1-146v1m0 1v1m0 207v1m1-207v1m1 1v1m0 1v1m0 135v1m0 9v1m0 57v1m1-203v1m0 1v1m1 1v1m1 1v1m0 1v1m0 124v1m1-124v1m0 131v1m0 61v1m1-193v1m0 1v1m1 1v1m0 1v1m0 113v1m0 72v1m1-186v1m1 1v1m0 1v1m0 115v1m0 66v1m1-182v1m0 1v1m0 102v1m1-102v1m0 177v1m1-177v1m0 1v1m1 1v1m0 93v1m0 7v1m1-101v1m0 1v1m1 1v1m0 1v1m1 1v1m0 82v1m0 84v1m1-167v1m0 1v1m0 86v1m1-86v1m0 1v1m1 1v1m0 71v1m1-71v1m0 1v1m1 1v1m0 72v1m1-72v1m0 1v1m0 60v1m1-60v1m0 1v1m0 162v1m0 9v1m1-172v1m0 161v1m0 7v1m1-169v1m0 1v1m0 49v1m0 6v1m0 101v4m0 1v2m1-164v1m0 1v1m1 1v1m0 163v3m1-165v1m0 1v1m0 38v1m1-38v1m0 42v1m0 105v2m0 1v5m1-155v1m0 1v1m1 1v1m0 1v1m0 27v1m0 121v3m1-151v1m1 1v1m0 1v1m0 27v1m0 104v4m0 1v2m1-138v1m0 1v1m0 16v1m0 110v1m0 7v1m1-135v1m0 124v1m0 9v1m1-134v1m0 1v1m1 1v1m0 7v1m0 5v1m1-13v1m0 1v1m1 1v1m0 1v1m1-2v1m1 4v1m0 1v1m1 1v1m0 1v1m1-295v1m0 9v1m0 271v1m0 13v1m1-298v1m0 9v1m0 288v1m0 1v1m1-305v3m0 7v3m0 278v1m0 14v1m1-22v1m0 22v1m0 1v1m1-313v1m0 1v1m0 7v1m0 1v1m0 301v1m0 1v1m1-314v1m0 9v1m0 304v1m1-315v1m0 1v1m0 7v1m0 1v1m0 269v1m0 4v1m0 28v1m0 1v1m1 1v1m0 1v1m1-325v3m0 7v3m0 313v1m1-44v1m0 44v1m0 1v1m1-333v1m0 1v1m0 7v1m0 1v1m0 276v1m0 44v1m1-332v1m0 9v1m0 322v1m0 1v1m1-335v1m0 1v1m0 7v1m0 1v1m0 267v1m0 55v1m0 1v1m2-341v3m0 7v3m0 272v1m1-287v1m0 9v1m0 271v1m1-284v1m0 9v1m2 271v1m0 3v1m3-6v1m1 2v1m4-3v1m8-4v1m24 177v3m1-4v1m0 3v1m6-5v1m0 3v1m1-4v3m284-381v1m0 1v2m0 41v1m0 31v1m0 7v1m1-46v1m0 3v1m0 33v1m0 5v1m0 92v1m0 4v1m1-142v1m0 1v1m0 35v2m0 1v2m0 43v1m0 1v3m0 6v3m0 37v2m0 1v1m1-180v2m0 38v1m0 141v1m1-144v1m0 1v1m0 89v1m0 1v1m0 6v1m0 1v2m0 33v1m0 1v2m0 2v1m1-186v2m0 38v1m0 3v1m0 139v1m1-146v1m0 39v2m0 1v2m0 43v1m0 1v3m0 6v3m0 37v2m0 1v1m1-104v1m0 5v1m0 92v1m0 4v1m1-183v2m0 1v1m0 35v1m0 37v1m0 7v1"/>
<path stroke="#0000ff" d="M260 39.5h17m470 97h3m0 40h2m-8 1h2m2 0h2m0 2h2m-5 39h3m-3 6h3m-283 15h5m1 2h2m271 5h3m0 1h2m-278 6h2m274 0h2m-5 1h3m-282 1h5m272 62h9m-6 3h3m-4 2h5m-282 1h3m2 0h5m2 0h3m-10 6h5m268 1h3m-4 2h5m-279 1h9m65 73h3m-5 4h2m-459 39h5m-9 2h3m7 0h3m-13 4h3m7 2h3m-13 4h3m7 0h3m-9 2h5m258 0h3m-3 4h3m-4 4h5m-7 4h9m-274.5-22.5v1m0 3v3m1-8v1m0 3v1m0 3v1m4-11v1m0 5v1m0 3v1m0 1v1m1-6v3m4-7v3m1-6v1m0 1v1m0 3v1m0 5v1m4-11v1m0 3v1m0 3v1m1-8v3m0 3v1m163-429v1m0 15v1m1-16v1m0 13v1m1-14v1m0 11v1m1-12v1m0 9v1m1-10v4m0 1v4m8-9v4m0 1v4m1-10v1m0 9v1m1-12v1m0 11v1m1-14v1m0 13v1m1-16v1m0 15v1m66 394v1m3 20v5m1 0v1m1 0v1m1 0v1m1-7v3m2 5v3m0 1v4m2-16v3m1 3v1m1-2v1m1-2v1m1-6v5m85-212v1m4 67v1m19-84v1m0 11v1m1-14v1m0 1v1m0 9v1m0 1v1m1-12v1m0 7v1m1-8v1m0 5v1m1-6v5m1 71v2m0 1v2m1 0v1m1-87v1m0 13v1m0 72v1m1 0v1m2-87v1m0 9v1m1-10v2m0 5v2m0 69v2m0 1v5m0 1v3m0 1v4m1-93v5m2 78v1m1-2v1m1-2v1m1-6v2m0 1v2m50 68v1m1 0v1m1 0v13m1-14v1m1-2v1m1 0v1m1 0v13m1-14v1m1-2v1m1 0v1m1 0v13m1 0v1m3-1v1m1-5v1m0 1v2m197-267v1m1-5v3m0 2v1m0 32v1m0 1v3m0 35v1m0 3v3m0 24v1m0 5v1m0 62v1m0 1v1m0 7v3m1-192v1m0 3v2m0 38v3m0 33v1m0 1v1m0 3v1m0 24v1m0 3v1m0 66v1m0 9v1m1-152v3m0 68v3m0 75v1m1-152v1m0 139v1m0 1v2m0 1v1m0 1v2m0 1v1m0 1v1m0 2v1m0 1v2m1-157v1m0 148v1m1-191v1m0 3v2m0 74v1m0 1v1m0 3v1m0 24v1m0 3v1m0 66v1m0 9v1m1-192v3m0 2v1m0 36v1m0 3v1m0 31v1m0 3v3m0 26v3m0 64v1m0 1v1m0 7v3m1-185v1m0 32v2m0 2v3"/>
<path stroke="#00ffff" d="M417 349.5h2m-217 54h4m0 1h4m0 1h4m0 1h4m0 1h4m0 1h5m0 1h4m0 1h4m0 1h4m0 1h4m0 1h5m0 1h4m0 1h4m0 1h4m0 1h4m0 1h4m-47 1h8m39 0h5m-44 1h18m26 0h4m-30 1h18m12 0h4m-16 1h20m-2 1h18m-12 1h4m8 0h18m-26 1h5m21 0h18m-39 1h4m35 0h18m-53 1h4m49 0h10m-59 1h4m0 1h4m0 1h5m0 1h4m-1 1h5m-1 1h5m-1 1h5m-1 1h5m0 1h3m-179.5-180.5v1m1 1v1m0 1v1m1 1v1m0 1v1m1 1v1m0 1v1m1 1v1m0 1v1m1 1v1m0 1v1m1 1v1m0 1v1m1 1v1m0 1v1m1 1v1m0 1v1m1 1v1m0 1v1m1 1v1m0 1v1m1 1v1m0 1v1m1 1v1m0 1v1m1 1v1m0 1v1m1 1v1m0 1v1m1 1v1m0 1v1m1 1v1m0 1v1m1 1v1m0 1v1m1 1v1m0 1v1m1 1v1m0 1v1m1 1v1m0 1v1m1 1v1m0 1v1m1 1v1m0 1v1m1 1v1m0 1v1m1 1v1m0 1v1m1 1v1m0 1v1m1 1v1m0 1v1m1 1v1m0 1v1m1 1v1m0 1v1m1 1v1m0 1v1m1 1v1m0 1v1m1 1v1m0 1v1m1 1v1m0 1v1m1 1v1m0 1v1m1 1v1m0 1v1m1 1v1m0 1v1m1 1v1m0 1v1m2 1v1m12 8v1m2-1v1m2 0v1m2-1v1m2-1v1m2 0v1m2-1v1m2 0v1m2-1v1m2-1v1m2 0v1m2-1v1m2-1v1m2 0v1m2-1v1m2 0v1m2-1v1m2-1v1m2 0v1m2-1v1m2 0v1m2-1v1m2-1v1m2 0v1m2-1v1m6 0v1m6 1v1m2-1v1m2-1v1m2 0v1m2-1v1m2-1v1m2 0v1m2-1v1m2 0v1m2-1v1m2-1v1m2 0v1m2-1v1m2 0v1m2-1v1m2-1v1m2 0v1m2-1v1m2 0v1m2-1v1m2-1v1m2 0v1m2-1v1m2 0v1m2-1v1m4 0v1m20-1v1m1-3v1m2-3v1m2-3v1m2-3v1m2-3v1m1-3v1m2-3v1m2-3v1m2-3v1m1-3v1m2-3v1m2-3v1m2-3v1m1-3v1m2-3v1m2-3v1m2-3v1m2-3v1m3-5v1m2-3v1m2-3v1m1-3v1m2-3v1m2-3v1m2-3v1m1-3v1m2-3v1m2-3v1m2-3v1m2-3v1m1-3v1m2-3v1m2-3v1m2-3v1m1-3v1m0 30v2m1-6v4m1-33v1m0 23v5m1-9v4m1-26v1m0 16v5m1-9v4m1-19v1m0 9v5m1-17v1m0 6v5m1-9v4m1-9v5m1-9v2m0 1v1m1-9v5m1-9v4m1-9v5m0 9v1m1-19v4m1-9v5m0 16v1m1-26v4m0 19v1m1-29v5m1-9v4m0 26v1m1-36v5m1-9v4m0 33v1m1-43v5m1-10v5m0 40v1m1-50v4m0 43v1m1-53v5m1-9v4m0 50v1m1-60v5m1-9v4m0 57v1m1-67v5m1-9v4m0 64v1m1-72v3m0 66v1"/>
<path stroke="#008080" d="M307 112.5h5m-9 12h3m7 0h3m431 212h3m-5 6h2m3 0h2m-450.5-216.5v1m1-2v1m0 1v1m1-12v5m0 7v1m1-14v1m0 5v1m0 5v1m1-14v1m0 7v2m0 1v2m1-14v1m1 36v1m5-38v1m1 0v1m0 7v2m0 1v2m1-12v1m0 5v1m0 5v1m1-12v5m0 7v1m1-4v1m0 1v1m1-2v1m427 216v1m1-6v3m0 3v1m1-8v1m0 3v1m0 1v1m4-7v1m0 3v1m0 1v1m1-6v3m0 3v1m1-2v1"/>
</g>
<text transform="translate(91.0,349) scale(0.83,1)" x="0.00" y="0" fill="#ff0000" font-size="13.2">1</text>
<text transform="translate(128.0,430) scale(0.83,1)" x="0.00" y="0" fill="#ffff00" font-size="13.2">2</text>
<text transform="translate(198.0,489) scale(0.83,1)" x="0.00" y="0" fill="#00ff00" font-size="13.2">3</text>
<text transform="translate(299.0,514) scale(0.83,1)" x="0.00" y="0" fill="#0000ff" font-size="13.2">4</text>
<text transform="translate(417.0,475) scale(0.83,1)" x="0.00" y="0" fill="#ff0000" font-size="13.2">5</text>
<text transform="translate(495.0,369) scale(0.83,1)" x="0.00" y="0" fill="#ffff00" font-size="13.2">6</text>
<text transform="translate(501.0,259) scale(0.83,1)" x="0.00" y="0" fill="#00ff00" font-size="13.2">7</text>
<text transform="translate(464.0,178) scale(0.83,1)" x="0.00" y="0" fill="#0000ff" font-size="13.2">8</text>
<text transform="translate(394.0,119) scale(0.83,1)" x="0.00" y="0" fill="#ff0000" font-size="13.2">9</text>
<text transform="translate(289.0,94) scale(0.83,1)" x="0.00 9.64" y="0" fill="#ffff00" font-size="13.2">10</text>
<text transform="translate(171.0,133) scale(0.83,1)" x="0.00 9.64" y="0" fill="#00ff00" font-size="13.2">11</text>
<text transform="translate(93.0,239) scale(0.83,1)" x="0.00 9.64" y="0" fill="#0000ff" font-size="13.2">12</text>
<text class="ang" transform="translate(336.5,134) scale(1,2.16)" x="0" y="0" fill="#ffff00" textLength="18.6" lengthAdjust="spacingAndGlyphs">MC</text>
<text transform="translate(110.7,308) scale(.86,2.4)" x="0 7.9 15.2" y="0" font-size="10.8" fill="#ff0000">Asc</text>
</svg>
<div id="side">
<div class="r" style="top:7.4px"><span style="color:#ffffff">Astrolog 5.40</span></div>
<div class="r" style="top:17.4px">"Anonymous"</div>
<div class="r" style="top:27.4px">Fri July 17, 1970</div>
<div class="r" style="top:37.4px"> 2:00am (ST +8:00 GMT)</div>
<div class="r" style="top:47.4px">"Taiwan"</div>
<div class="r" style="top:57.4px">121°31E 25°03N</div>
<div class="r" style="top:67.4px">Placidus houses.</div>
<div class="r" style="top:77.4px">Tropical, Geocentric.</div>
<div class="r" style="top:87.4px">Julian Day = 2440784.2500</div>
<div class="r" style="top:107.4px"><span style="color:#ff0000"> 1st house: </span><span style="color:#00ff00"> 8Gem08</span></div>
<div class="r" style="top:117.4px"><span style="color:#ffff00"> 2nd house: </span><span style="color:#0000ff"> 3Can10</span></div>
<div class="r" style="top:127.4px"><span style="color:#00ff00"> 3rd house: </span><span style="color:#0000ff">27Can02</span></div>
<div class="r" style="top:137.4px"><span style="color:#0000ff"> 4th house: </span><span style="color:#ff0000">23Leo20</span></div>
<div class="r" style="top:147.4px"><span style="color:#ff0000"> 5th house: </span><span style="color:#ffff00">24Vir57</span></div>
<div class="r" style="top:157.4px"><span style="color:#ffff00"> 6th house: </span><span style="color:#0000ff"> 1Sco39</span></div>
<div class="r" style="top:167.4px"><span style="color:#00ff00"> 7th house: </span><span style="color:#ff0000"> 8Sag08</span></div>
<div class="r" style="top:177.4px"><span style="color:#0000ff"> 8th house: </span><span style="color:#ffff00"> 3Cap10</span></div>
<div class="r" style="top:187.4px"><span style="color:#ff0000"> 9th house: </span><span style="color:#ffff00">27Cap02</span></div>
<div class="r" style="top:197.4px"><span style="color:#ffff00">10th house: </span><span style="color:#00ff00">23Aqu20</span></div>
<div class="r" style="top:207.4px"><span style="color:#00ff00">11th house: </span><span style="color:#0000ff">24Pis57</span></div>
<div class="r" style="top:217.4px"><span style="color:#0000ff">12th house: </span><span style="color:#ffff00"> 1Tau39</span></div>
<div class="r" style="top:237.4px"><span style="color:#ff0000"> Sun: </span><span style="color:#0000ff">23Can46</span><span style="color:#ffffff"> </span> - 0°00'</div>
<div class="r" style="top:247.4px"><span style="color:#0000ff">Moon: </span><span style="color:#ff0000">24Sag58</span><span style="color:#ffffff"> </span> - 4°49'</div>
<div class="r" style="top:257.4px"><span style="color:#00ff00">Merc: </span><span style="color:#ff0000"> 4Leo48</span><span style="color:#ffffff"> </span> + 1°49'</div>
<div class="r" style="top:267.4px"><span style="color:#00ff00">Venu: </span><span style="color:#ffff00"> 4Vir50</span><span style="color:#ffffff"> </span> + 1°19'</div>
<div class="r" style="top:277.4px"><span style="color:#ff0000">Mars: </span><span style="color:#0000ff">29Can00</span><span style="color:#ffffff"> </span> + 1°06'</div>
<div class="r" style="top:287.4px"><span style="color:#ff0000">Jupi: </span><span style="color:#00ff00">26Lib52</span><span style="color:#ffffff"> </span> + 1°12'</div>
<div class="r" style="top:297.4px"><span style="color:#ffff00">Satu: </span><span style="color:#ffff00">20Tau31</span><span style="color:#ffffff"> </span> - 2°13'</div>
<div class="r" style="top:307.4px"><span style="color:#00ff00">Uran: </span><span style="color:#00ff00"> 5Lib10</span><span style="color:#ffffff"> </span> + 0°42'</div>
<div class="r" style="top:317.4px"><span style="color:#0000ff">Nept: </span><span style="color:#0000ff">28Sco16</span><span style="color:#ffffff">R</span> + 1°43'</div>
<div class="r" style="top:327.4px"><span style="color:#0000ff">Plut: </span><span style="color:#ffff00">25Vir08</span><span style="color:#ffffff"> </span> +15°36'</div>
<div class="r" style="top:337.4px"><span style="color:#008080">Node: </span><span style="color:#0000ff"> 4Pis52</span><span style="color:#ffffff">R</span> + 0°00'</div>
<div class="r" style="top:357.4px">Fire: 2, Earth: 3,</div>
<div class="r" style="top:367.4px">Air : 4, Water: 4</div>
<div class="r" style="top:377.4px">Car: 4, Fix: 4, Mut: 5</div>
<div class="r" style="top:387.4px">Yang: 6, Yin: 7</div>
<div class="r" style="top:397.4px">M: 3, N: 8, A: 5, D: 6</div>
<div class="r" style="top:407.4px">Ang: 3, Suc: 4, Cad: 4</div>
<div class="r" style="top:417.4px">Learn: 7, Share: 6</div>
</div>
</div>
</body></html>
